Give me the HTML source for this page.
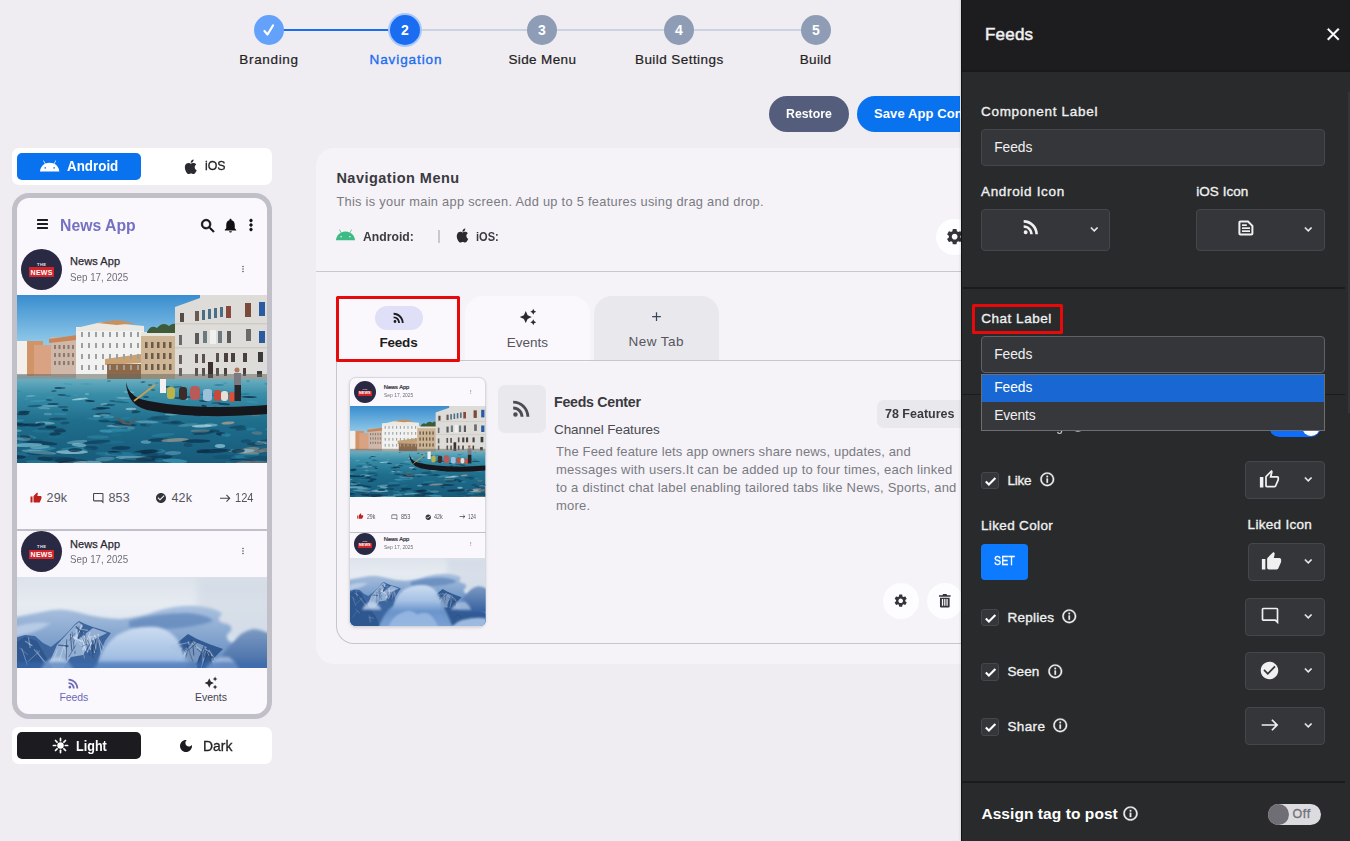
<!DOCTYPE html>
<html lang="en"><head><meta charset="utf-8"><title>Navigation</title>
<style>
html,body{margin:0;padding:0}
body{width:1350px;height:841px;overflow:hidden;background:#efedf1;position:relative;
font-family:"Liberation Sans",sans-serif;}
.t{position:absolute;white-space:nowrap;line-height:1;}
.b{position:absolute;box-sizing:border-box;}
svg{position:absolute;overflow:visible}
</style></head><body>
<div class="b" style="left:269px;top:29px;width:136px;height:2px;background:#1a6cf0;border-radius:0px;"></div>
<div class="b" style="left:405px;top:29px;width:411px;height:2px;background:#ccd3e0;border-radius:0px;"></div>
<div class="b" style="left:254px;top:15px;width:30px;height:30px;background:#64a1fb;border-radius:15px;"></div>
<div class="b" style="left:388px;top:13px;width:34px;height:34px;background:#a8c8fb;border-radius:17px;"></div>
<div class="b" style="left:390px;top:15px;width:30px;height:30px;background:#1a6cf0;border-radius:15px;"></div>
<div class="b" style="left:527px;top:15px;width:30px;height:30px;background:#8e9db5;border-radius:15px;"></div>
<div class="b" style="left:664px;top:15px;width:30px;height:30px;background:#8e9db5;border-radius:15px;"></div>
<div class="b" style="left:801px;top:15px;width:30px;height:30px;background:#8e9db5;border-radius:15px;"></div>
<div class="t" style="left:401.0px;top:22.5px;font-size:14px;font-weight:700;color:#fff;letter-spacing:0.00px;">2</div>
<div class="t" style="left:538.0px;top:22.5px;font-size:14px;font-weight:700;color:#fff;letter-spacing:0.00px;">3</div>
<div class="t" style="left:675.0px;top:22.5px;font-size:14px;font-weight:700;color:#fff;letter-spacing:0.00px;">4</div>
<div class="t" style="left:812.0px;top:22.5px;font-size:14px;font-weight:700;color:#fff;letter-spacing:0.00px;">5</div>
<svg style="left:262px;top:23px" width="14" height="14" viewBox="0 0 14 14"><path d="M2.5 8 L5.5 11.5 L11 2.5" fill="none" stroke="#fff" stroke-width="2.2" stroke-linecap="round" stroke-linejoin="round"/></svg>
<div class="t" style="left:239.3px;top:52.6px;font-size:13.5px;font-weight:400;color:#222;letter-spacing:0.67px;-webkit-text-stroke:0.2px #222;">Branding</div>
<div class="t" style="left:369.5px;top:52.6px;font-size:13.5px;font-weight:400;color:#1a6cf0;letter-spacing:0.91px;-webkit-text-stroke:0.35px #1a6cf0;">Navigation</div>
<div class="t" style="left:508.4px;top:52.6px;font-size:13.5px;font-weight:400;color:#222;letter-spacing:0.38px;-webkit-text-stroke:0.2px #222;">Side Menu</div>
<div class="t" style="left:635.0px;top:52.6px;font-size:13.5px;font-weight:400;color:#222;letter-spacing:0.43px;-webkit-text-stroke:0.2px #222;">Build Settings</div>
<div class="t" style="left:799.8px;top:52.6px;font-size:13.5px;font-weight:400;color:#222;letter-spacing:0.30px;-webkit-text-stroke:0.2px #222;">Build</div>
<div class="b" style="left:769px;top:96px;width:80px;height:36px;background:#545e7c;border-radius:18px;"></div>
<div class="t" style="left:786.0px;top:107.3px;font-size:13px;font-weight:700;color:#fff;letter-spacing:0.00px;transform:scaleX(0.946);transform-origin:0 0;">Restore</div>
<div class="b" style="left:857px;top:96px;width:103px;height:36px;background:#0872ef;border-radius:0px;border-radius:18px 0 0 18px;"></div>
<div class="t" style="left:874.0px;top:107.3px;font-size:13px;font-weight:700;color:#fff;letter-spacing:0.00px;letter-spacing:0.1px;">Save App Configuration</div>
<div class="b" style="left:12px;top:148px;width:260px;height:37px;background:#fff;border-radius:7px;"></div>
<div class="b" style="left:17px;top:153px;width:124px;height:27px;background:#0872ef;border-radius:5px;"></div>
<div class="t" style="left:66.7px;top:159.2px;font-size:14.5px;font-weight:700;color:#fff;letter-spacing:0.00px;transform:scaleX(0.923);transform-origin:0 0;">Android</div>
<div class="t" style="left:205.0px;top:159.4px;font-size:13.6px;font-weight:400;color:#222;letter-spacing:0.00px;-webkit-text-stroke:0.3px #222;transform:scaleX(0.909);transform-origin:0 0;">iOS</div>
<div class="b" style="left:12px;top:193px;width:260px;height:526px;background:#faf8fd;border-radius:17px;border:5px solid #c1c0c9;"></div>
<div class="t" style="left:59.8px;top:216.8px;font-size:16.5px;font-weight:700;color:#7470c2;letter-spacing:0.00px;transform:scaleX(0.956);transform-origin:0 0;">News App</div>
<div class="b" style="left:12px;top:727px;width:260px;height:37px;background:#fff;border-radius:7px;"></div>
<div class="b" style="left:17px;top:732px;width:124px;height:27px;background:#1c1c20;border-radius:5px;"></div>
<div class="t" style="left:76.0px;top:738.7px;font-size:14.5px;font-weight:700;color:#fff;letter-spacing:0.00px;transform:scaleX(0.869);transform-origin:0 0;">Light</div>
<div class="t" style="left:202.6px;top:738.7px;font-size:14.5px;font-weight:400;color:#222;letter-spacing:0.00px;-webkit-text-stroke:0.3px #222;transform:scaleX(0.960);transform-origin:0 0;">Dark</div>
<div class="b" style="left:316px;top:148px;width:684px;height:516px;background:#f5f3f8;border-radius:18px;"></div>
<div class="t" style="left:336.4px;top:171.2px;font-size:14.5px;font-weight:700;color:#3a3a40;letter-spacing:0.48px;">Navigation Menu</div>
<div class="t" style="left:336.4px;top:196.4px;font-size:12.8px;font-weight:400;color:#7a7a82;letter-spacing:0.30px;">This is your main app screen. Add up to 5 features using drag and drop.</div>
<div class="t" style="left:362.8px;top:230.0px;font-size:13px;font-weight:700;color:#3a3a40;letter-spacing:0.00px;transform:scaleX(0.938);transform-origin:0 0;">Android:</div>
<div class="t" style="left:476.2px;top:230.0px;font-size:13px;font-weight:700;color:#3a3a40;letter-spacing:0.00px;transform:scaleX(0.853);transform-origin:0 0;">iOS:</div>
<div class="b" style="left:438px;top:230px;width:2px;height:13px;background:#c8c8ce;border-radius:0px;"></div>
<div class="b" style="left:316px;top:271px;width:684px;height:1px;background:#c8c8ce;border-radius:0px;"></div>
<svg style="left:37.6px;top:154.0px" width="23.3" height="23.3" viewBox="0 0 24 24"><path d="M16.61 15.15C16.15 15.15 15.77 14.78 15.77 14.32S16.15 13.5 16.61 13.5H16.61C17.07 13.5 17.45 13.86 17.45 14.32C17.45 14.78 17.07 15.15 16.61 15.15M7.41 15.15C6.95 15.15 6.57 14.78 6.57 14.32C6.57 13.86 6.95 13.5 7.41 13.5H7.41C7.87 13.5 8.24 13.86 8.24 14.32C8.24 14.78 7.87 15.15 7.41 15.15M16.91 10.14L18.58 7.26C18.67 7.09 18.61 6.88 18.45 6.79C18.28 6.69 18.07 6.75 18 6.92L16.29 9.83C14.95 9.22 13.5 8.9 12 8.91C10.47 8.91 9 9.24 7.73 9.82L6.04 6.91C5.95 6.74 5.74 6.68 5.57 6.78C5.4 6.87 5.35 7.08 5.44 7.25L7.1 10.13C4.25 11.69 2.29 14.58 2 18H22C21.72 14.59 19.77 11.7 16.91 10.14H16.91Z" fill="#fff" /></svg>
<svg style="left:181.8px;top:157.9px" width="17.5" height="17.5" viewBox="0 0 24 24"><path d="M18.71,19.5C17.88,20.74 17,21.95 15.66,21.97C14.32,22 13.89,21.18 12.37,21.18C10.84,21.18 10.37,21.95 9.1,22C7.79,22.05 6.8,20.68 5.96,19.47C4.25,17 2.94,12.45 4.7,9.39C5.57,7.87 7.13,6.91 8.82,6.88C10.1,6.86 11.32,7.75 12.11,7.75C12.89,7.75 14.37,6.68 15.92,6.84C16.57,6.87 18.39,7.1 19.56,8.82C19.47,8.88 17.39,10.1 17.41,12.63C17.44,15.65 20.06,16.66 20.09,16.67C20.06,16.74 19.67,18.11 18.71,19.5M13,3.5C13.73,2.67 14.94,2.04 15.94,2C16.07,3.17 15.6,4.35 14.9,5.19C14.21,6.04 13.07,6.7 11.95,6.61C11.8,5.46 12.36,4.26 13,3.5Z" fill="#2a2a30" /></svg>
<svg style="left:51.5px;top:736.7px" width="17" height="17" viewBox="0 0 24 24"><circle cx="12" cy="12" r="4.600" fill="#fff"/><g stroke="#fff" stroke-width="2.400" stroke-linecap="round"><line x1="18.80" y1="12.00" x2="22.00" y2="12.00"/><line x1="16.81" y1="16.81" x2="19.07" y2="19.07"/><line x1="12.00" y1="18.80" x2="12.00" y2="22.00"/><line x1="7.19" y1="16.81" x2="4.93" y2="19.07"/><line x1="5.20" y1="12.00" x2="2.00" y2="12.00"/><line x1="7.19" y1="7.19" x2="4.93" y2="4.93"/><line x1="12.00" y1="5.20" x2="12.00" y2="2.00"/><line x1="16.81" y1="7.19" x2="19.07" y2="4.93"/></g></svg>
<svg style="left:178.0px;top:737.5px" width="16" height="16" viewBox="0 0 24 24"><path d="M12 3c-4.970 0-9 4.030-9 9s4.030 9 9 9 9-4.030 9-9c0-.46-.04-.92-.1-1.360-.98 1.370-2.580 2.260-4.400 2.260-2.980 0-5.400-2.420-5.400-5.400 0-1.810.89-3.420 2.260-4.400-.44-.06-.9-.1-1.360-.1z" fill="#1c1c20" /></svg>
<div class="b" style="left:37px;top:218.5px;width:11.200000000000003px;height:2.0999999999999943px;background:#1c1c20;border-radius:0.6px;"></div>
<div class="b" style="left:37px;top:222.5px;width:11.200000000000003px;height:2.0999999999999943px;background:#1c1c20;border-radius:0.6px;"></div>
<div class="b" style="left:37px;top:226.5px;width:11.200000000000003px;height:2.0999999999999943px;background:#1c1c20;border-radius:0.6px;"></div>
<svg style="left:198.5px;top:216.5px" width="18" height="18" viewBox="0 0 24 24"><path d="M15.5 14h-.79l-.28-.27C15.41 12.59 16 11.11 16 9.5 16 5.91 13.09 3 9.5 3S3 5.91 3 9.5 5.91 16 9.5 16c1.61 0 3.09-.59 4.23-1.57l.27.28v.79l5 4.99L20.49 19l-4.99-5zm-6 0C7.01 14 5 11.99 5 9.5S7.01 5 9.5 5 14 7.01 14 9.5 11.99 14 9.5 14z" fill="#111" stroke="#111" stroke-width="0.900"/></svg>
<svg style="left:222.0px;top:216.5px" width="17" height="17" viewBox="0 0 24 24"><path d="M12 22c1.1 0 2-.9 2-2h-4c0 1.1.89 2 2 2zm6-6v-5c0-3.07-1.64-5.64-4.5-6.32V4c0-.83-.67-1.5-1.5-1.5s-1.5.67-1.5 1.5v.68C7.63 5.36 6 7.92 6 11v5l-2 2v1h16v-1l-2-2z" fill="#111" /></svg>
<svg style="left:242.0px;top:216.0px" width="18" height="18" viewBox="0 0 24 24"><path d="M12 8c1.1 0 2-.9 2-2s-.9-2-2-2-2 .9-2 2 .9 2 2 2zm0 2c-1.1 0-2 .9-2 2s.9 2 2 2 2-.9 2-2-.9-2-2-2zm0 6c-1.1 0-2 .9-2 2s.9 2 2 2 2-.9 2-2-.9-2-2-2z" fill="#111" stroke="#111" stroke-width="0.500"/></svg>
<div class="b" style="left:21.0px;top:248.89999999999998px;width:41.0px;height:41.0px;background:#2a2944;border-radius:20.5px;"></div><div class="t" style="left:37.0px;top:262.9px;font-size:4.0px;font-weight:700;color:#e8e8f0;letter-spacing:0.50px;">THE</div><div class="b" style="left:28.6px;top:267.29999999999995px;width:25.799999999999997px;height:9.600000000000023px;background:#d0252b;border-radius:0.5px;"></div><div class="t" style="left:30.6px;top:269.0px;font-size:7.0px;font-weight:700;color:#fff;letter-spacing:0.27px;">NEWS</div>
<div class="t" style="left:70.0px;top:256.3px;font-size:11px;font-weight:400;color:#2a2a30;letter-spacing:0.07px;-webkit-text-stroke:0.25px #2a2a30;">News App</div>
<div class="t" style="left:70.0px;top:271.5px;font-size:10.5px;font-weight:400;color:#707078;letter-spacing:0.00px;transform:scaleX(0.932);transform-origin:0 0;">Sep 17, 2025</div>
<svg style="left:238.0px;top:264.0px" width="10" height="10" viewBox="0 0 24 24"><path d="M12 8c1.1 0 2-.9 2-2s-.9-2-2-2-2 .9-2 2 .9 2 2 2zm0 2c-1.1 0-2 .9-2 2s.9 2 2 2 2-.9 2-2-.9-2-2-2zm0 6c-1.1 0-2 .9-2 2s.9 2 2 2 2-.9 2-2-.9-2-2-2z" fill="#55555c" /></svg>
<svg style="left:17px;top:295px" width="250" height="168" viewBox="0 0 250 168" preserveAspectRatio="none">
<defs><linearGradient id="vs1" x1="0" y1="0" x2="0" y2="1"><stop offset="0" stop-color="#398dcf"/><stop offset=".55" stop-color="#8fc8e8"/><stop offset="1" stop-color="#a8d4ec"/></linearGradient>
<linearGradient id="vw1" x1="0" y1="0" x2="0" y2="1"><stop offset="0" stop-color="#6aaec0"/><stop offset=".18" stop-color="#3a8ea8"/><stop offset=".5" stop-color="#1f6e8c"/><stop offset="1" stop-color="#185a7a"/></linearGradient>
<clipPath id="vc1"><rect width="250" height="168"/></clipPath></defs>
<g clip-path="url(#vc1)">
<rect width="250" height="86" fill="url(#vs1)"/>
<rect x="0" y="46" width="11" height="34" fill="#f2efec"/>
<rect x="10" y="46" width="16" height="35" fill="#d09468"/>
<rect x="17" y="50" width="19" height="31" fill="#d8a283"/>
<rect x="34" y="42" width="26" height="40" fill="#cfb8aa"/><polygon points="32,44 60,40 60,45 32,48" fill="#c98558"/>
<rect x="59" y="32" width="68" height="52" fill="#f1f1ef"/><polygon points="59,33 85,27 127,31 127,36 59,36" fill="#ece8e2"/><polygon points="80,28 100,25 118,28 100,30" fill="#c9905e"/>
<rect x="124" y="38" width="35" height="47" fill="#cdb596"/><rect x="124" y="37" width="35" height="4" fill="#e8e4da"/>
<path d="M130 37 q4 -8 10 -4 q6 -7 12 -2 q5 -4 7 -1 v8 h-29z" fill="#3f5a38"/>
<polygon points="88,64 124,59 124,68 88,70" fill="#caa272"/><rect x="90" y="69" width="34" height="15" fill="#8f6848"/>
<polygon points="158,12 183,3 183,0 250,0 250,86 158,86" fill="#dedcd8"/>
<rect x="158" y="28" width="92" height="1.500" fill="#cfccc6"/><rect x="158" y="52" width="92" height="1.500" fill="#cfccc6"/>
<rect x="163" y="18" width="4" height="9" fill="#5a4a44"/><rect x="178" y="16" width="4" height="10" fill="#6a5a50"/><rect x="185" y="15" width="3" height="10" fill="#4a7088"/><rect x="191" y="14" width="3" height="10" fill="#4a7088"/><rect x="197" y="13" width="3" height="10" fill="#4a7088"/><rect x="203" y="12" width="3" height="10" fill="#4a7088"/><rect x="209" y="11" width="5" height="12" fill="#8a4a3a"/><rect x="228" y="8" width="6" height="14" fill="#7a4a3a"/><rect x="242" y="7" width="6" height="14" fill="#2a5aa0"/><rect x="162" y="40" width="3" height="10" fill="#6a6a6a"/><rect x="178" y="38" width="4" height="11" fill="#5a5a5a"/><rect x="186" y="36" width="4" height="12" fill="#6a7a80"/><rect x="193" y="35" width="6" height="14" fill="#f0f0f0"/><rect x="201" y="36" width="4" height="12" fill="#6a7a80"/><rect x="210" y="36" width="4" height="12" fill="#5a5a5a"/><rect x="229" y="34" width="5" height="12" fill="#6a6a6a"/><rect x="242" y="36" width="6" height="12" fill="#2a5aa0"/><rect x="162" y="60" width="3" height="9" fill="#6a6060"/><rect x="178" y="59" width="3" height="9" fill="#5a5050"/><rect x="185" y="59" width="3" height="9" fill="#5a5050"/><rect x="199" y="58" width="3" height="9" fill="#5a5050"/><rect x="207" y="58" width="4" height="9" fill="#4a4040"/><rect x="214" y="58" width="4" height="9" fill="#4a4040"/><rect x="226" y="58" width="4" height="9" fill="#4a4040"/><rect x="241" y="57" width="5" height="10" fill="#3a3a3a"/><rect x="162" y="73" width="3" height="8" fill="#6a6060"/><rect x="178" y="73" width="3" height="8" fill="#5a5050"/><rect x="185" y="73" width="3" height="8" fill="#5a5050"/><rect x="191" y="67" width="5" height="16" fill="#3a3030"/><rect x="199" y="73" width="3" height="8" fill="#5a5050"/><rect x="207" y="73" width="3" height="8" fill="#4a4040"/><rect x="226" y="73" width="3" height="8" fill="#4a4040"/><rect x="240" y="76" width="5" height="6" fill="#3a3a3a"/><rect x="64" y="37" width="2" height="5" fill="#9aa0a4"/><rect x="71" y="37" width="2" height="5" fill="#9aa0a4"/><rect x="78" y="37" width="2" height="5" fill="#9aa0a4"/><rect x="85" y="37" width="2" height="5" fill="#9aa0a4"/><rect x="92" y="37" width="2" height="5" fill="#9aa0a4"/><rect x="99" y="37" width="2" height="5" fill="#9aa0a4"/><rect x="106" y="37" width="2" height="5" fill="#9aa0a4"/><rect x="113" y="37" width="2" height="5" fill="#9aa0a4"/><rect x="120" y="37" width="2" height="5" fill="#9aa0a4"/><rect x="64" y="48" width="2" height="5" fill="#9aa0a4"/><rect x="71" y="48" width="2" height="5" fill="#9aa0a4"/><rect x="78" y="48" width="2" height="5" fill="#9aa0a4"/><rect x="85" y="48" width="2" height="5" fill="#9aa0a4"/><rect x="92" y="48" width="2" height="5" fill="#9aa0a4"/><rect x="99" y="48" width="2" height="5" fill="#9aa0a4"/><rect x="106" y="48" width="2" height="5" fill="#9aa0a4"/><rect x="113" y="48" width="2" height="5" fill="#9aa0a4"/><rect x="120" y="48" width="2" height="5" fill="#9aa0a4"/><rect x="64" y="59" width="2" height="5" fill="#9aa0a4"/><rect x="71" y="59" width="2" height="5" fill="#9aa0a4"/><rect x="78" y="59" width="2" height="5" fill="#9aa0a4"/><rect x="85" y="59" width="2" height="5" fill="#9aa0a4"/><rect x="92" y="59" width="2" height="5" fill="#9aa0a4"/><rect x="99" y="59" width="2" height="5" fill="#9aa0a4"/><rect x="106" y="59" width="2" height="5" fill="#9aa0a4"/><rect x="113" y="59" width="2" height="5" fill="#9aa0a4"/><rect x="120" y="59" width="2" height="5" fill="#9aa0a4"/><rect x="64" y="70" width="2" height="5" fill="#9aa0a4"/><rect x="71" y="70" width="2" height="5" fill="#9aa0a4"/><rect x="78" y="70" width="2" height="5" fill="#9aa0a4"/><rect x="85" y="70" width="2" height="5" fill="#9aa0a4"/><rect x="92" y="70" width="2" height="5" fill="#9aa0a4"/><rect x="99" y="70" width="2" height="5" fill="#9aa0a4"/><rect x="106" y="70" width="2" height="5" fill="#9aa0a4"/><rect x="113" y="70" width="2" height="5" fill="#9aa0a4"/><rect x="120" y="70" width="2" height="5" fill="#9aa0a4"/><rect x="128" y="47" width="2.500" height="6" fill="#6a5a48"/><rect x="134" y="47" width="2.500" height="6" fill="#6a5a48"/><rect x="140" y="47" width="2.500" height="6" fill="#6a5a48"/><rect x="146" y="47" width="2.500" height="6" fill="#6a5a48"/><rect x="152" y="47" width="2.500" height="6" fill="#6a5a48"/><rect x="128" y="58" width="2.500" height="6" fill="#6a5a48"/><rect x="134" y="58" width="2.500" height="6" fill="#6a5a48"/><rect x="140" y="58" width="2.500" height="6" fill="#6a5a48"/><rect x="146" y="58" width="2.500" height="6" fill="#6a5a48"/><rect x="152" y="58" width="2.500" height="6" fill="#6a5a48"/><rect x="128" y="69" width="2.500" height="6" fill="#6a5a48"/><rect x="134" y="69" width="2.500" height="6" fill="#6a5a48"/><rect x="140" y="69" width="2.500" height="6" fill="#6a5a48"/><rect x="146" y="69" width="2.500" height="6" fill="#6a5a48"/><rect x="152" y="69" width="2.500" height="6" fill="#6a5a48"/><rect x="37.0" y="50" width="2" height="4" fill="#8a7a70"/><rect x="41.5" y="50" width="2" height="4" fill="#8a7a70"/><rect x="46.0" y="50" width="2" height="4" fill="#8a7a70"/><rect x="50.5" y="50" width="2" height="4" fill="#8a7a70"/><rect x="55.0" y="50" width="2" height="4" fill="#8a7a70"/><rect x="37.0" y="58" width="2" height="4" fill="#8a7a70"/><rect x="41.5" y="58" width="2" height="4" fill="#8a7a70"/><rect x="46.0" y="58" width="2" height="4" fill="#8a7a70"/><rect x="50.5" y="58" width="2" height="4" fill="#8a7a70"/><rect x="55.0" y="58" width="2" height="4" fill="#8a7a70"/><rect x="37.0" y="66" width="2" height="4" fill="#8a7a70"/><rect x="41.5" y="66" width="2" height="4" fill="#8a7a70"/><rect x="46.0" y="66" width="2" height="4" fill="#8a7a70"/><rect x="50.5" y="66" width="2" height="4" fill="#8a7a70"/><rect x="55.0" y="66" width="2" height="4" fill="#8a7a70"/>
<rect x="0" y="79" width="250" height="6" fill="#6a6a62" opacity=".55"/>
<rect y="84" width="250" height="84" fill="url(#vw1)"/>
<ellipse cx="141" cy="124" rx="11.3" ry="1.4" fill="#0d3a55" opacity="0.43" transform="rotate(0 141 124)"/><ellipse cx="204" cy="139" rx="4.9" ry="1.7" fill="#0b2f4a" opacity="0.75" transform="rotate(2 204 139)"/><ellipse cx="97" cy="136" rx="8.4" ry="1.6" fill="#3a98b4" opacity="0.42" transform="rotate(-6 97 136)"/><ellipse cx="6" cy="130" rx="5.4" ry="1.5" fill="#0b2f4a" opacity="0.70" transform="rotate(-2 6 130)"/><ellipse cx="43" cy="136" rx="6.2" ry="1.6" fill="#0b2f4a" opacity="0.65" transform="rotate(-1 43 136)"/><ellipse cx="259" cy="109" rx="9.4" ry="1.1" fill="#6fb0c4" opacity="0.46" transform="rotate(3 259 109)"/><ellipse cx="-2" cy="129" rx="8.8" ry="1.5" fill="#0b2f4a" opacity="0.73" transform="rotate(-1 -2 129)"/><ellipse cx="219" cy="166" rx="5.2" ry="2.2" fill="#0b2f4a" opacity="0.79" transform="rotate(-1 219 166)"/><ellipse cx="160" cy="92" rx="5.5" ry="0.7" fill="#0b2f4a" opacity="0.49" transform="rotate(-6 160 92)"/><ellipse cx="239" cy="120" rx="4.2" ry="1.3" fill="#9a8478" opacity="0.43" transform="rotate(1 239 120)"/><ellipse cx="41" cy="124" rx="9.6" ry="1.4" fill="#0a2840" opacity="0.40" transform="rotate(-1 41 124)"/><ellipse cx="63" cy="104" rx="8.4" ry="1.0" fill="#a8d4e0" opacity="0.80" transform="rotate(-6 63 104)"/><ellipse cx="259" cy="102" rx="5.8" ry="0.9" fill="#2a86a4" opacity="0.80" transform="rotate(-3 259 102)"/><ellipse cx="199" cy="108" rx="4.7" ry="1.0" fill="#0b2f4a" opacity="0.38" transform="rotate(-3 199 108)"/><ellipse cx="-6" cy="139" rx="7.9" ry="1.7" fill="#2a86a4" opacity="0.78" transform="rotate(-0 -6 139)"/><ellipse cx="224" cy="134" rx="5.6" ry="1.6" fill="#0d3a55" opacity="0.46" transform="rotate(-4 224 134)"/><ellipse cx="244" cy="148" rx="6.7" ry="1.9" fill="#a8d4e0" opacity="0.54" transform="rotate(-5 244 148)"/><ellipse cx="250" cy="89" rx="2.7" ry="0.7" fill="#1f7494" opacity="0.54" transform="rotate(5 250 89)"/><ellipse cx="130" cy="127" rx="11.9" ry="1.4" fill="#8cc4d4" opacity="0.45" transform="rotate(1 130 127)"/><ellipse cx="156" cy="158" rx="8.4" ry="2.0" fill="#8cc4d4" opacity="0.38" transform="rotate(-1 156 158)"/><ellipse cx="3" cy="107" rx="4.3" ry="1.0" fill="#2a86a4" opacity="0.39" transform="rotate(-4 3 107)"/><ellipse cx="79" cy="124" rx="9.6" ry="1.4" fill="#2a86a4" opacity="0.62" transform="rotate(5 79 124)"/><ellipse cx="87" cy="126" rx="6.1" ry="1.4" fill="#0b2f4a" opacity="0.57" transform="rotate(3 87 126)"/><ellipse cx="260" cy="113" rx="3.3" ry="1.1" fill="#3a98b4" opacity="0.37" transform="rotate(5 260 113)"/><ellipse cx="25" cy="148" rx="15.6" ry="1.9" fill="#0b2f4a" opacity="0.66" transform="rotate(5 25 148)"/><ellipse cx="103" cy="159" rx="15.2" ry="2.1" fill="#6fb0c4" opacity="0.36" transform="rotate(2 103 159)"/><ellipse cx="-7" cy="118" rx="3.6" ry="1.2" fill="#0b2f4a" opacity="0.80" transform="rotate(5 -7 118)"/><ellipse cx="95" cy="147" rx="12.8" ry="1.8" fill="#1f7494" opacity="0.56" transform="rotate(0 95 147)"/><ellipse cx="129" cy="130" rx="6.4" ry="1.5" fill="#0b2f4a" opacity="0.45" transform="rotate(2 129 130)"/><ellipse cx="156" cy="128" rx="11.9" ry="1.4" fill="#0b2f4a" opacity="0.41" transform="rotate(1 156 128)"/><ellipse cx="194" cy="130" rx="6.7" ry="1.5" fill="#a8d4e0" opacity="0.50" transform="rotate(2 194 130)"/><ellipse cx="106" cy="103" rx="7.2" ry="0.9" fill="#8cc4d4" opacity="0.52" transform="rotate(1 106 103)"/><ellipse cx="27" cy="113" rx="6.4" ry="1.1" fill="#8cc4d4" opacity="0.67" transform="rotate(5 27 113)"/><ellipse cx="36" cy="109" rx="5.7" ry="1.1" fill="#0d3a55" opacity="0.72" transform="rotate(-1 36 109)"/><ellipse cx="171" cy="130" rx="10.3" ry="1.5" fill="#6fb0c4" opacity="0.38" transform="rotate(-6 171 130)"/><ellipse cx="1" cy="159" rx="14.2" ry="2.1" fill="#1f7494" opacity="0.64" transform="rotate(1 1 159)"/><ellipse cx="99" cy="140" rx="6.0" ry="1.7" fill="#1f7494" opacity="0.46" transform="rotate(-4 99 140)"/><ellipse cx="160" cy="90" rx="3.7" ry="0.7" fill="#3a98b4" opacity="0.64" transform="rotate(-2 160 90)"/><ellipse cx="43" cy="93" rx="5.8" ry="0.7" fill="#0b2f4a" opacity="0.69" transform="rotate(0 43 93)"/><ellipse cx="51" cy="89" rx="5.0" ry="0.7" fill="#3a98b4" opacity="0.58" transform="rotate(6 51 89)"/><ellipse cx="219" cy="99" rx="6.1" ry="0.9" fill="#0a2840" opacity="0.77" transform="rotate(3 219 99)"/><ellipse cx="112" cy="97" rx="5.4" ry="0.8" fill="#a8d4e0" opacity="0.60" transform="rotate(2 112 97)"/><ellipse cx="211" cy="128" rx="6.6" ry="1.5" fill="#b0a090" opacity="0.77" transform="rotate(-5 211 128)"/><ellipse cx="95" cy="106" rx="3.0" ry="1.0" fill="#0f4460" opacity="0.47" transform="rotate(3 95 106)"/><ellipse cx="126" cy="87" rx="1.7" ry="0.6" fill="#0a2840" opacity="0.70" transform="rotate(-0 126 87)"/><ellipse cx="208" cy="88" rx="1.9" ry="0.6" fill="#2a86a4" opacity="0.59" transform="rotate(2 208 88)"/><ellipse cx="117" cy="163" rx="18.6" ry="2.2" fill="#6fb0c4" opacity="0.73" transform="rotate(2 117 163)"/><ellipse cx="123" cy="165" rx="18.3" ry="2.2" fill="#0d3a55" opacity="0.55" transform="rotate(1 123 165)"/><ellipse cx="142" cy="156" rx="6.8" ry="2.0" fill="#3a98b4" opacity="0.47" transform="rotate(2 142 156)"/><ellipse cx="225" cy="166" rx="13.7" ry="2.2" fill="#0d3a55" opacity="0.59" transform="rotate(1 225 166)"/><ellipse cx="135" cy="103" rx="5.3" ry="0.9" fill="#2a86a4" opacity="0.59" transform="rotate(-5 135 103)"/><ellipse cx="137" cy="163" rx="18.5" ry="2.2" fill="#0b2f4a" opacity="0.66" transform="rotate(-5 137 163)"/><ellipse cx="102" cy="131" rx="12.8" ry="1.5" fill="#a8d4e0" opacity="0.46" transform="rotate(-0 102 131)"/><ellipse cx="233" cy="115" rx="9.9" ry="1.2" fill="#6fb0c4" opacity="0.49" transform="rotate(-4 233 115)"/><ellipse cx="240" cy="138" rx="5.3" ry="1.7" fill="#8a8a80" opacity="0.45" transform="rotate(2 240 138)"/><ellipse cx="86" cy="113" rx="7.3" ry="1.1" fill="#0b2f4a" opacity="0.73" transform="rotate(1 86 113)"/><ellipse cx="179" cy="146" rx="14.4" ry="1.8" fill="#0a2840" opacity="0.63" transform="rotate(0 179 146)"/><ellipse cx="134" cy="159" rx="7.7" ry="2.1" fill="#0d3a55" opacity="0.45" transform="rotate(3 134 159)"/><ellipse cx="234" cy="154" rx="8.6" ry="2.0" fill="#8a8a80" opacity="0.75" transform="rotate(-4 234 154)"/><ellipse cx="186" cy="106" rx="4.1" ry="1.0" fill="#0a2840" opacity="0.59" transform="rotate(2 186 106)"/><ellipse cx="160" cy="103" rx="7.1" ry="0.9" fill="#0f4460" opacity="0.76" transform="rotate(6 160 103)"/><ellipse cx="127" cy="96" rx="5.9" ry="0.8" fill="#3a98b4" opacity="0.72" transform="rotate(4 127 96)"/><ellipse cx="-3" cy="126" rx="10.2" ry="1.4" fill="#3a98b4" opacity="0.57" transform="rotate(-4 -3 126)"/><ellipse cx="37" cy="96" rx="2.8" ry="0.8" fill="#0b2f4a" opacity="0.61" transform="rotate(-4 37 96)"/><ellipse cx="11" cy="143" rx="5.2" ry="1.8" fill="#0a2840" opacity="0.58" transform="rotate(-1 11 143)"/><ellipse cx="-6" cy="136" rx="11.0" ry="1.6" fill="#8cc4d4" opacity="0.53" transform="rotate(-2 -6 136)"/><ellipse cx="239" cy="117" rx="7.7" ry="1.2" fill="#0b2f4a" opacity="0.50" transform="rotate(-5 239 117)"/><ellipse cx="226" cy="157" rx="16.4" ry="2.0" fill="#6fb0c4" opacity="0.58" transform="rotate(6 226 157)"/><ellipse cx="60" cy="154" rx="15.9" ry="2.0" fill="#2a86a4" opacity="0.72" transform="rotate(-1 60 154)"/><ellipse cx="228" cy="161" rx="14.3" ry="2.1" fill="#2a86a4" opacity="0.68" transform="rotate(-5 228 161)"/><ellipse cx="117" cy="115" rx="2.9" ry="1.2" fill="#0b2f4a" opacity="0.45" transform="rotate(5 117 115)"/><ellipse cx="81" cy="142" rx="11.3" ry="1.7" fill="#3a98b4" opacity="0.38" transform="rotate(0 81 142)"/><ellipse cx="48" cy="128" rx="4.5" ry="1.4" fill="#0b2f4a" opacity="0.40" transform="rotate(-5 48 128)"/><ellipse cx="110" cy="106" rx="5.7" ry="1.0" fill="#3a98b4" opacity="0.52" transform="rotate(-5 110 106)"/><ellipse cx="235" cy="107" rx="6.1" ry="1.0" fill="#3a98b4" opacity="0.61" transform="rotate(6 235 107)"/><ellipse cx="209" cy="140" rx="4.8" ry="1.7" fill="#2a86a4" opacity="0.77" transform="rotate(-1 209 140)"/><ellipse cx="221" cy="167" rx="12.9" ry="2.2" fill="#1f7494" opacity="0.54" transform="rotate(0 221 167)"/><ellipse cx="89" cy="136" rx="6.8" ry="1.6" fill="#3a98b4" opacity="0.77" transform="rotate(2 89 136)"/><ellipse cx="-3" cy="149" rx="13.5" ry="1.9" fill="#3a98b4" opacity="0.42" transform="rotate(3 -3 149)"/><ellipse cx="232" cy="119" rx="9.0" ry="1.3" fill="#8a8a80" opacity="0.54" transform="rotate(-0 232 119)"/><ellipse cx="56" cy="168" rx="12.7" ry="2.3" fill="#6fb0c4" opacity="0.76" transform="rotate(-4 56 168)"/><ellipse cx="56" cy="167" rx="15.1" ry="2.2" fill="#0a2840" opacity="0.56" transform="rotate(-4 56 167)"/><ellipse cx="133" cy="90" rx="2.3" ry="0.7" fill="#0a2840" opacity="0.55" transform="rotate(-3 133 90)"/><ellipse cx="103" cy="135" rx="11.6" ry="1.6" fill="#2a86a4" opacity="0.78" transform="rotate(3 103 135)"/><ellipse cx="21" cy="106" rx="8.2" ry="1.0" fill="#3a98b4" opacity="0.73" transform="rotate(-3 21 106)"/><ellipse cx="186" cy="137" rx="11.1" ry="1.6" fill="#0f4460" opacity="0.44" transform="rotate(-3 186 137)"/><ellipse cx="237" cy="168" rx="17.8" ry="2.3" fill="#9a8478" opacity="0.54" transform="rotate(1 237 168)"/><ellipse cx="136" cy="95" rx="2.3" ry="0.8" fill="#0d3a55" opacity="0.60" transform="rotate(2 136 95)"/><ellipse cx="119" cy="117" rx="4.6" ry="1.2" fill="#0d3a55" opacity="0.73" transform="rotate(-5 119 117)"/><ellipse cx="208" cy="96" rx="5.2" ry="0.8" fill="#2a86a4" opacity="0.55" transform="rotate(3 208 96)"/><ellipse cx="31" cy="119" rx="4.3" ry="1.3" fill="#6fb0c4" opacity="0.50" transform="rotate(1 31 119)"/><ellipse cx="239" cy="149" rx="9.4" ry="1.9" fill="#0b2f4a" opacity="0.50" transform="rotate(1 239 149)"/><ellipse cx="143" cy="122" rx="10.1" ry="1.3" fill="#0b2f4a" opacity="0.38" transform="rotate(-3 143 122)"/><ellipse cx="12" cy="142" rx="7.4" ry="1.7" fill="#3a98b4" opacity="0.50" transform="rotate(5 12 142)"/><ellipse cx="167" cy="104" rx="4.4" ry="1.0" fill="#a8d4e0" opacity="0.67" transform="rotate(1 167 104)"/><ellipse cx="244" cy="163" rx="17.5" ry="2.2" fill="#0f4460" opacity="0.45" transform="rotate(6 244 163)"/><ellipse cx="129" cy="147" rx="5.3" ry="1.8" fill="#8cc4d4" opacity="0.51" transform="rotate(-1 129 147)"/><ellipse cx="43" cy="119" rx="7.5" ry="1.3" fill="#3a98b4" opacity="0.42" transform="rotate(1 43 119)"/><ellipse cx="14" cy="101" rx="4.8" ry="0.9" fill="#8cc4d4" opacity="0.45" transform="rotate(-5 14 101)"/><ellipse cx="70" cy="99" rx="2.2" ry="0.9" fill="#a8d4e0" opacity="0.38" transform="rotate(1 70 99)"/><ellipse cx="13" cy="152" rx="5.6" ry="1.9" fill="#1f7494" opacity="0.39" transform="rotate(2 13 152)"/><ellipse cx="191" cy="98" rx="5.6" ry="0.8" fill="#0d3a55" opacity="0.57" transform="rotate(5 191 98)"/><ellipse cx="114" cy="114" rx="5.5" ry="1.2" fill="#a8d4e0" opacity="0.65" transform="rotate(-0 114 114)"/><ellipse cx="185" cy="131" rx="10.4" ry="1.5" fill="#a8d4e0" opacity="0.79" transform="rotate(-2 185 131)"/><ellipse cx="92" cy="86" rx="1.9" ry="0.6" fill="#0b2f4a" opacity="0.59" transform="rotate(3 92 86)"/><ellipse cx="104" cy="153" rx="9.8" ry="2.0" fill="#0d3a55" opacity="0.80" transform="rotate(-1 104 153)"/><ellipse cx="45" cy="100" rx="4.6" ry="0.9" fill="#0b2f4a" opacity="0.56" transform="rotate(3 45 100)"/><ellipse cx="32" cy="111" rx="9.3" ry="1.1" fill="#a8d4e0" opacity="0.36" transform="rotate(-0 32 111)"/><ellipse cx="74" cy="153" rx="7.1" ry="2.0" fill="#0d3a55" opacity="0.62" transform="rotate(-0 74 153)"/><ellipse cx="109" cy="129" rx="11.8" ry="1.5" fill="#0f4460" opacity="0.63" transform="rotate(5 109 129)"/><ellipse cx="220" cy="132" rx="8.4" ry="1.5" fill="#0f4460" opacity="0.70" transform="rotate(-5 220 132)"/><ellipse cx="98" cy="158" rx="7.7" ry="2.1" fill="#0a2840" opacity="0.79" transform="rotate(4 98 158)"/><ellipse cx="203" cy="151" rx="5.2" ry="1.9" fill="#8cc4d4" opacity="0.76" transform="rotate(-1 203 151)"/><ellipse cx="104" cy="107" rx="8.2" ry="1.0" fill="#0f4460" opacity="0.42" transform="rotate(5 104 107)"/><ellipse cx="25" cy="154" rx="13.9" ry="2.0" fill="#3a98b4" opacity="0.59" transform="rotate(-4 25 154)"/><ellipse cx="-10" cy="151" rx="14.4" ry="1.9" fill="#8cc4d4" opacity="0.39" transform="rotate(-3 -10 151)"/><ellipse cx="16" cy="146" rx="9.8" ry="1.8" fill="#0f4460" opacity="0.36" transform="rotate(-4 16 146)"/><ellipse cx="174" cy="102" rx="6.9" ry="0.9" fill="#0b2f4a" opacity="0.59" transform="rotate(0 174 102)"/><ellipse cx="215" cy="99" rx="3.9" ry="0.9" fill="#0b2f4a" opacity="0.60" transform="rotate(6 215 99)"/><ellipse cx="8" cy="142" rx="4.9" ry="1.7" fill="#0a2840" opacity="0.65" transform="rotate(3 8 142)"/><ellipse cx="23" cy="152" rx="10.0" ry="1.9" fill="#6fb0c4" opacity="0.67" transform="rotate(-3 23 152)"/><ellipse cx="114" cy="133" rx="3.8" ry="1.6" fill="#6fb0c4" opacity="0.44" transform="rotate(1 114 133)"/><ellipse cx="92" cy="110" rx="6.4" ry="1.1" fill="#0f4460" opacity="0.69" transform="rotate(1 92 110)"/><ellipse cx="41" cy="93" rx="3.7" ry="0.7" fill="#0f4460" opacity="0.78" transform="rotate(1 41 93)"/><ellipse cx="80" cy="147" rx="13.9" ry="1.8" fill="#0d3a55" opacity="0.63" transform="rotate(-4 80 147)"/><ellipse cx="38" cy="139" rx="6.0" ry="1.7" fill="#0a2840" opacity="0.62" transform="rotate(-5 38 139)"/><ellipse cx="32" cy="105" rx="3.2" ry="1.0" fill="#0b2f4a" opacity="0.50" transform="rotate(4 32 105)"/><ellipse cx="28" cy="164" rx="7.9" ry="2.2" fill="#0a2840" opacity="0.57" transform="rotate(5 28 164)"/><ellipse cx="186" cy="138" rx="10.4" ry="1.7" fill="#0d3a55" opacity="0.62" transform="rotate(-6 186 138)"/><ellipse cx="82" cy="114" rx="7.6" ry="1.2" fill="#0a2840" opacity="0.44" transform="rotate(-2 82 114)"/><ellipse cx="18" cy="111" rx="7.7" ry="1.1" fill="#0f4460" opacity="0.60" transform="rotate(-2 18 111)"/><ellipse cx="28" cy="128" rx="10.0" ry="1.5" fill="#6fb0c4" opacity="0.80" transform="rotate(2 28 128)"/><ellipse cx="143" cy="165" rx="5.5" ry="2.2" fill="#2a86a4" opacity="0.41" transform="rotate(-0 143 165)"/><ellipse cx="80" cy="121" rx="3.9" ry="1.3" fill="#a8d4e0" opacity="0.56" transform="rotate(-5 80 121)"/><ellipse cx="27" cy="168" rx="18.1" ry="2.3" fill="#3a98b4" opacity="0.38" transform="rotate(5 27 168)"/><ellipse cx="191" cy="100" rx="7.3" ry="0.9" fill="#0d3a55" opacity="0.41" transform="rotate(4 191 100)"/><ellipse cx="232" cy="110" rx="4.3" ry="1.1" fill="#2a86a4" opacity="0.43" transform="rotate(1 232 110)"/><ellipse cx="-1" cy="92" rx="2.7" ry="0.7" fill="#6fb0c4" opacity="0.41" transform="rotate(3 -1 92)"/><ellipse cx="235" cy="157" rx="12.7" ry="2.0" fill="#9a8478" opacity="0.56" transform="rotate(-4 235 157)"/><ellipse cx="144" cy="118" rx="4.4" ry="1.3" fill="#1f7494" opacity="0.46" transform="rotate(5 144 118)"/><ellipse cx="202" cy="90" rx="5.0" ry="0.7" fill="#1f7494" opacity="0.78" transform="rotate(1 202 90)"/><ellipse cx="101" cy="125" rx="8.9" ry="1.4" fill="#1f7494" opacity="0.69" transform="rotate(-0 101 125)"/><ellipse cx="216" cy="170" rx="17.6" ry="2.3" fill="#8a8a80" opacity="0.76" transform="rotate(0 216 170)"/><ellipse cx="107" cy="130" rx="12.1" ry="1.5" fill="#0b2f4a" opacity="0.48" transform="rotate(1 107 130)"/><ellipse cx="92" cy="122" rx="5.9" ry="1.3" fill="#3a98b4" opacity="0.74" transform="rotate(-3 92 122)"/><ellipse cx="55" cy="157" rx="16.0" ry="2.0" fill="#a8d4e0" opacity="0.66" transform="rotate(0 55 157)"/><ellipse cx="73" cy="106" rx="5.0" ry="1.0" fill="#0b2f4a" opacity="0.80" transform="rotate(3 73 106)"/><ellipse cx="90" cy="159" rx="12.0" ry="2.1" fill="#2a86a4" opacity="0.45" transform="rotate(3 90 159)"/><ellipse cx="234" cy="134" rx="4.7" ry="1.6" fill="#2a86a4" opacity="0.61" transform="rotate(-1 234 134)"/><ellipse cx="187" cy="111" rx="2.8" ry="1.1" fill="#0a2840" opacity="0.75" transform="rotate(4 187 111)"/><ellipse cx="86" cy="119" rx="7.8" ry="1.3" fill="#0b2f4a" opacity="0.55" transform="rotate(-2 86 119)"/><ellipse cx="29" cy="113" rx="8.5" ry="1.2" fill="#2a86a4" opacity="0.44" transform="rotate(4 29 113)"/><ellipse cx="6" cy="144" rx="7.7" ry="1.8" fill="#a8d4e0" opacity="0.36" transform="rotate(2 6 144)"/><ellipse cx="141" cy="145" rx="10.2" ry="1.8" fill="#0b2f4a" opacity="0.64" transform="rotate(-2 141 145)"/><ellipse cx="250" cy="155" rx="8.1" ry="2.0" fill="#9a8478" opacity="0.54" transform="rotate(-4 250 155)"/><ellipse cx="23" cy="158" rx="13.8" ry="2.1" fill="#0d3a55" opacity="0.58" transform="rotate(-2 23 158)"/><ellipse cx="207" cy="109" rx="6.2" ry="1.1" fill="#0d3a55" opacity="0.79" transform="rotate(5 207 109)"/><ellipse cx="51" cy="101" rx="3.0" ry="0.9" fill="#1f7494" opacity="0.79" transform="rotate(-1 51 101)"/><ellipse cx="133" cy="130" rx="4.0" ry="1.5" fill="#1f7494" opacity="0.59" transform="rotate(-1 133 130)"/><ellipse cx="34" cy="134" rx="13.5" ry="1.6" fill="#0d3a55" opacity="0.48" transform="rotate(1 34 134)"/><ellipse cx="232" cy="102" rx="8.1" ry="0.9" fill="#0a2840" opacity="0.76" transform="rotate(1 232 102)"/><ellipse cx="231" cy="86" rx="1.8" ry="0.6" fill="#0f4460" opacity="0.49" transform="rotate(-0 231 86)"/><ellipse cx="69" cy="89" rx="5.2" ry="0.7" fill="#3a98b4" opacity="0.68" transform="rotate(0 69 89)"/><ellipse cx="198" cy="136" rx="5.0" ry="1.6" fill="#0a2840" opacity="0.47" transform="rotate(3 198 136)"/><ellipse cx="60" cy="147" rx="10.6" ry="1.8" fill="#6fb0c4" opacity="0.57" transform="rotate(-6 60 147)"/><ellipse cx="183" cy="136" rx="9.7" ry="1.6" fill="#b0a090" opacity="0.36" transform="rotate(-0 183 136)"/><ellipse cx="109" cy="123" rx="5.4" ry="1.3" fill="#2a86a4" opacity="0.40" transform="rotate(-4 109 123)"/><ellipse cx="146" cy="140" rx="11.7" ry="1.7" fill="#2a86a4" opacity="0.49" transform="rotate(-5 146 140)"/><ellipse cx="158" cy="112" rx="6.5" ry="1.1" fill="#0a2840" opacity="0.39" transform="rotate(4 158 112)"/><ellipse cx="59" cy="100" rx="3.1" ry="0.9" fill="#3a98b4" opacity="0.70" transform="rotate(-5 59 100)"/><ellipse cx="88" cy="120" rx="4.9" ry="1.3" fill="#8cc4d4" opacity="0.41" transform="rotate(3 88 120)"/><ellipse cx="26" cy="136" rx="11.5" ry="1.6" fill="#2a86a4" opacity="0.35" transform="rotate(-1 26 136)"/><ellipse cx="15" cy="130" rx="8.8" ry="1.5" fill="#0b2f4a" opacity="0.79" transform="rotate(2 15 130)"/><ellipse cx="254" cy="146" rx="11.3" ry="1.8" fill="#0b2f4a" opacity="0.46" transform="rotate(-0 254 146)"/><ellipse cx="88" cy="164" rx="9.8" ry="2.2" fill="#6fb0c4" opacity="0.45" transform="rotate(-4 88 164)"/><ellipse cx="259" cy="135" rx="11.2" ry="1.6" fill="#3a98b4" opacity="0.43" transform="rotate(4 259 135)"/><ellipse cx="48" cy="165" rx="10.3" ry="2.2" fill="#0a2840" opacity="0.51" transform="rotate(-4 48 165)"/><ellipse cx="34" cy="132" rx="5.6" ry="1.5" fill="#0a2840" opacity="0.69" transform="rotate(-0 34 132)"/><ellipse cx="159" cy="127" rx="5.1" ry="1.4" fill="#0a2840" opacity="0.37" transform="rotate(-3 159 127)"/><ellipse cx="158" cy="166" rx="12.4" ry="2.2" fill="#3a98b4" opacity="0.77" transform="rotate(3 158 166)"/><ellipse cx="87" cy="109" rx="3.6" ry="1.1" fill="#a8d4e0" opacity="0.41" transform="rotate(-3 87 109)"/><ellipse cx="22" cy="157" rx="17.5" ry="2.0" fill="#a8d4e0" opacity="0.39" transform="rotate(5 22 157)"/><ellipse cx="198" cy="113" rx="6.6" ry="1.2" fill="#0a2840" opacity="0.62" transform="rotate(-0 198 113)"/><ellipse cx="129" cy="102" rx="3.0" ry="0.9" fill="#0a2840" opacity="0.54" transform="rotate(1 129 102)"/><ellipse cx="181" cy="97" rx="3.4" ry="0.8" fill="#3a98b4" opacity="0.52" transform="rotate(5 181 97)"/><ellipse cx="134" cy="156" rx="10.5" ry="2.0" fill="#0f4460" opacity="0.45" transform="rotate(-2 134 156)"/><ellipse cx="48" cy="115" rx="3.2" ry="1.2" fill="#0a2840" opacity="0.60" transform="rotate(4 48 115)"/><ellipse cx="70" cy="168" rx="14.8" ry="2.3" fill="#8cc4d4" opacity="0.60" transform="rotate(-2 70 168)"/><ellipse cx="199" cy="96" rx="3.9" ry="0.8" fill="#1f7494" opacity="0.39" transform="rotate(-1 199 96)"/><ellipse cx="6" cy="119" rx="6.1" ry="1.3" fill="#0a2840" opacity="0.67" transform="rotate(-3 6 119)"/><ellipse cx="45" cy="164" rx="15.6" ry="2.2" fill="#0d3a55" opacity="0.58" transform="rotate(3 45 164)"/><ellipse cx="207" cy="162" rx="11.5" ry="2.1" fill="#0f4460" opacity="0.36" transform="rotate(-1 207 162)"/><ellipse cx="7" cy="117" rx="6.1" ry="1.2" fill="#0a2840" opacity="0.73" transform="rotate(-2 7 117)"/><ellipse cx="229" cy="146" rx="5.1" ry="1.8" fill="#0f4460" opacity="0.60" transform="rotate(-3 229 146)"/><ellipse cx="40" cy="142" rx="9.2" ry="1.7" fill="#1f7494" opacity="0.36" transform="rotate(2 40 142)"/><ellipse cx="10" cy="104" rx="2.6" ry="1.0" fill="#3a98b4" opacity="0.54" transform="rotate(-3 10 104)"/><ellipse cx="228" cy="156" rx="9.6" ry="2.0" fill="#8cc4d4" opacity="0.66" transform="rotate(-3 228 156)"/><ellipse cx="118" cy="128" rx="3.6" ry="1.4" fill="#1f7494" opacity="0.45" transform="rotate(2 118 128)"/><ellipse cx="-10" cy="106" rx="5.9" ry="1.0" fill="#0d3a55" opacity="0.60" transform="rotate(4 -10 106)"/><ellipse cx="11" cy="150" rx="14.3" ry="1.9" fill="#6fb0c4" opacity="0.79" transform="rotate(-2 11 150)"/><ellipse cx="229" cy="115" rx="5.2" ry="1.2" fill="#3a98b4" opacity="0.53" transform="rotate(-4 229 115)"/><ellipse cx="33" cy="102" rx="4.2" ry="0.9" fill="#3a98b4" opacity="0.48" transform="rotate(-1 33 102)"/><ellipse cx="170" cy="117" rx="6.8" ry="1.2" fill="#1f7494" opacity="0.50" transform="rotate(-4 170 117)"/><ellipse cx="24" cy="129" rx="4.1" ry="1.5" fill="#0b2f4a" opacity="0.75" transform="rotate(-2 24 129)"/><ellipse cx="128" cy="157" rx="13.5" ry="2.0" fill="#0a2840" opacity="0.74" transform="rotate(-5 128 157)"/><ellipse cx="127" cy="107" rx="7.8" ry="1.0" fill="#0f4460" opacity="0.52" transform="rotate(2 127 107)"/><ellipse cx="221" cy="101" rx="3.4" ry="0.9" fill="#2a86a4" opacity="0.61" transform="rotate(-1 221 101)"/><ellipse cx="158" cy="145" rx="13.7" ry="1.8" fill="#b0a090" opacity="0.65" transform="rotate(-3 158 145)"/><ellipse cx="-6" cy="102" rx="5.7" ry="0.9" fill="#8cc4d4" opacity="0.47" transform="rotate(-3 -6 102)"/><ellipse cx="170" cy="107" rx="5.0" ry="1.0" fill="#2a86a4" opacity="0.37" transform="rotate(3 170 107)"/><ellipse cx="1" cy="96" rx="3.5" ry="0.8" fill="#2a86a4" opacity="0.53" transform="rotate(5 1 96)"/><ellipse cx="221" cy="156" rx="6.9" ry="2.0" fill="#0a2840" opacity="0.73" transform="rotate(-3 221 156)"/><ellipse cx="157" cy="119" rx="9.2" ry="1.3" fill="#a8d4e0" opacity="0.45" transform="rotate(-3 157 119)"/><ellipse cx="109" cy="159" rx="15.7" ry="2.1" fill="#1f7494" opacity="0.75" transform="rotate(-1 109 159)"/><ellipse cx="229" cy="99" rx="3.6" ry="0.9" fill="#1f7494" opacity="0.63" transform="rotate(-3 229 99)"/><ellipse cx="120" cy="105" rx="4.7" ry="1.0" fill="#0b2f4a" opacity="0.42" transform="rotate(-6 120 105)"/><ellipse cx="171" cy="150" rx="4.5" ry="1.9" fill="#0d3a55" opacity="0.44" transform="rotate(4 171 150)"/><ellipse cx="102" cy="127" rx="10.7" ry="1.4" fill="#0b2f4a" opacity="0.45" transform="rotate(1 102 127)"/><ellipse cx="58" cy="155" rx="7.1" ry="2.0" fill="#0d3a55" opacity="0.80" transform="rotate(-1 58 155)"/><ellipse cx="186" cy="156" rx="7.0" ry="2.0" fill="#0d3a55" opacity="0.65" transform="rotate(-3 186 156)"/><ellipse cx="140" cy="88" rx="1.9" ry="0.6" fill="#0d3a55" opacity="0.38" transform="rotate(-2 140 88)"/><ellipse cx="62" cy="150" rx="7.4" ry="1.9" fill="#a8d4e0" opacity="0.53" transform="rotate(4 62 150)"/><ellipse cx="197" cy="156" rx="17.2" ry="2.0" fill="#0a2840" opacity="0.67" transform="rotate(-3 197 156)"/><ellipse cx="-4" cy="162" rx="12.8" ry="2.1" fill="#0a2840" opacity="0.68" transform="rotate(0 -4 162)"/><ellipse cx="258" cy="109" rx="6.9" ry="1.1" fill="#0f4460" opacity="0.48" transform="rotate(5 258 109)"/><ellipse cx="15" cy="113" rx="5.2" ry="1.1" fill="#2a86a4" opacity="0.37" transform="rotate(-4 15 113)"/><ellipse cx="46" cy="112" rx="5.2" ry="1.1" fill="#0f4460" opacity="0.51" transform="rotate(-1 46 112)"/><ellipse cx="126" cy="87" rx="3.2" ry="0.6" fill="#0d3a55" opacity="0.36" transform="rotate(-4 126 87)"/><ellipse cx="149" cy="92" rx="4.5" ry="0.7" fill="#0a2840" opacity="0.78" transform="rotate(-3 149 92)"/><ellipse cx="181" cy="120" rx="4.6" ry="1.3" fill="#0a2840" opacity="0.50" transform="rotate(-4 181 120)"/>
<path d="M109 87 q2 12 14 17 q50 12 127 6 v9 q-70 6 -120 -4 q-20 -5 -21 -28z" fill="#15171c"/>
<rect x="143" y="84" width="6" height="14" fill="#f1f1f1"/><rect x="150" y="92" width="8" height="12" rx="3" fill="#b9b34a"/><rect x="162" y="92" width="8" height="13" rx="3" fill="#3a2c28"/><rect x="173" y="91" width="10" height="14" rx="4" fill="#b85a5a"/><rect x="186" y="94" width="9" height="12" rx="3" fill="#9cc0dc"/><rect x="197" y="95" width="7" height="11" rx="3" fill="#c9483a"/><rect x="204" y="96" width="7" height="10" rx="3" fill="#e4e0d8"/><rect x="212" y="97" width="6" height="10" rx="3" fill="#d8503a"/>
<rect x="217" y="78" width="7" height="12" fill="#7a7a80"/><rect x="217.500" y="90" width="6.500" height="16" fill="#26262c"/><circle cx="220" cy="75" r="2.500" fill="#b0785a"/>
<line x1="117" y1="106" x2="138" y2="90" stroke="#c9a050" stroke-width="1.600"/>
<path d="M95 120 l14 7 l3 1 l8 -6 l-6 8 l-8 -1z" fill="#5a5a58"/>
</g></svg>
<svg style="left:30.2px;top:491.8px" width="12" height="12" viewBox="0 0 24 24"><path d="M1 21h4V9H1v12zm22-11c0-1.1-.9-2-2-2h-6.31l.95-4.57.03-.32c0-.41-.17-.79-.44-1.060L14.170 1 7.590 7.590C7.220 7.950 7 8.450 7 9v10c0 1.100.9 2 2 2h9c.83 0 1.540-.5 1.840-1.220l3.020-7.050c.09-.23.14-.47.14-.73v-2z" fill="#c0201c" /></svg>
<div class="t" style="left:46.5px;top:492.2px;font-size:12.5px;font-weight:400;color:#55555c;letter-spacing:0.22px;">29k</div>
<svg style="left:92.3px;top:492.4px" width="12.5" height="12.5" viewBox="0 0 24 24"><path d="M20 17.170L18.830 16H4V4h16v13.170zM20 2H4c-1.100 0-2 .9-2 2v12c0 1.100.9 2 2 2h14l4 4V4c0-1.100-.9-2-2-2z" fill="#44444c" /></svg>
<div class="t" style="left:108.4px;top:492.2px;font-size:12.5px;font-weight:400;color:#55555c;letter-spacing:0.27px;">853</div>
<svg style="left:155.3px;top:492.0px" width="12" height="12" viewBox="0 0 24 24"><path d="M12 2C6.480 2 2 6.480 2 12s4.480 10 10 10 10-4.480 10-10S17.520 2 12 2zm-2 15l-5-5 1.410-1.410L10 14.170l7.590-7.590L19 8l-9 9z" fill="#33333a" /></svg>
<div class="t" style="left:171.5px;top:492.2px;font-size:12.5px;font-weight:400;color:#55555c;letter-spacing:0.17px;">42k</div>
<svg style="left:219.1px;top:491.8px" width="12.5" height="12.5" viewBox="0 0 24 24"><path d="M15 5l-1.410 1.410L18.170 11H2v2h16.170l-4.590 4.590L15 19l7-7-7-7z" fill="#44444c" /></svg>
<div class="t" style="left:235.0px;top:492.2px;font-size:12.5px;font-weight:400;color:#55555c;letter-spacing:0.00px;transform:scaleX(0.887);transform-origin:0 0;">124</div>
<div class="b" style="left:17px;top:529px;width:250px;height:2px;background:#c1c0c9;border-radius:0px;"></div>
<div class="b" style="left:21.0px;top:531.3px;width:41.0px;height:41.0px;background:#2a2944;border-radius:20.5px;"></div><div class="t" style="left:37.0px;top:545.3px;font-size:4.0px;font-weight:700;color:#e8e8f0;letter-spacing:0.50px;">THE</div><div class="b" style="left:28.6px;top:549.6999999999999px;width:25.799999999999997px;height:9.600000000000023px;background:#d0252b;border-radius:0.5px;"></div><div class="t" style="left:30.6px;top:551.4px;font-size:7.0px;font-weight:700;color:#fff;letter-spacing:0.27px;">NEWS</div>
<div class="t" style="left:70.0px;top:538.7px;font-size:11px;font-weight:400;color:#2a2a30;letter-spacing:0.07px;-webkit-text-stroke:0.25px #2a2a30;">News App</div>
<div class="t" style="left:70.0px;top:553.9px;font-size:10.5px;font-weight:400;color:#707078;letter-spacing:0.00px;transform:scaleX(0.932);transform-origin:0 0;">Sep 17, 2025</div>
<svg style="left:238.0px;top:546.4px" width="10" height="10" viewBox="0 0 24 24"><path d="M12 8c1.1 0 2-.9 2-2s-.9-2-2-2-2 .9-2 2 .9 2 2 2zm0 2c-1.1 0-2 .9-2 2s.9 2 2 2 2-.9 2-2-.9-2-2-2zm0 6c-1.1 0-2 .9-2 2s.9 2 2 2 2-.9 2-2-.9-2-2-2z" fill="#55555c" /></svg>
<svg style="left:17px;top:577px" width="250" height="91" viewBox="0 0 250 91" preserveAspectRatio="none">
<defs><linearGradient id="ms2" x1="0" y1="0" x2="0" y2="1"><stop offset="0" stop-color="#dde3ea"/><stop offset=".22" stop-color="#e6ebf1"/><stop offset=".45" stop-color="#dbe4ef"/><stop offset="1" stop-color="#c9d8ea"/></linearGradient>
<linearGradient id="mb2" gradientUnits="userSpaceOnUse" x1="0" y1="30" x2="0" y2="125"><stop offset="0" stop-color="#a9c0de"/><stop offset=".3" stop-color="#86a6cf"/><stop offset=".65" stop-color="#5b86c0"/><stop offset="1" stop-color="#4474b4"/></linearGradient>
<linearGradient id="mr2" gradientUnits="userSpaceOnUse" x1="0" y1="50" x2="0" y2="100"><stop offset="0" stop-color="#7f9cc4"/><stop offset="1" stop-color="#34609f"/></linearGradient>
<linearGradient id="mw2" gradientUnits="userSpaceOnUse" x1="0" y1="48" x2="0" y2="125"><stop offset="0" stop-color="#d3e1f3"/><stop offset=".4" stop-color="#a9c4e6"/><stop offset=".65" stop-color="#6c96cc"/><stop offset="1" stop-color="#7ea4d6"/></linearGradient>
<filter id="mf2" x="-10%" y="-30%" width="120%" height="160%"><feGaussianBlur stdDeviation="1.800"/></filter>
<filter id="mg2" x="-10%" y="-30%" width="120%" height="160%"><feGaussianBlur stdDeviation="0.600"/></filter>
<filter id="mh2" x="-10%" y="-30%" width="120%" height="160%"><feGaussianBlur stdDeviation="3.500"/></filter>
<clipPath id="mc2"><rect width="250" height="91"/></clipPath></defs>
<g clip-path="url(#mc2)">
<rect width="250" height="125" fill="url(#ms2)"/>
<rect x="180" y="0" width="80" height="60" fill="#cfd8e4" opacity=".6" filter="url(#mh2)"/>
<path d="M-6 41 Q10 38 25 35 Q43 30 60 35 Q80 41 103 42 Q125 40 140 34 Q160 28 180 29 Q200 31 205 37 Q198 43 206 46 Q216 47 214 54 Q205 60 215 66 L240 58 L256 56 V130 H-6z" fill="url(#mb2)" filter="url(#mf2)"/>
<path d="M112 44 Q140 36 170 36 Q192 38 196 44 Q180 50 150 52 Q125 54 112 50z" fill="#5f86bb" opacity=".75" filter="url(#mf2)"/>
<path d="M-4 50 Q15 44 34 46 Q20 56 -4 60z" fill="#c2d3ea" opacity=".8" filter="url(#mf2)"/>
<path d="M-2 61 L8 58 L18 59 L26 66 L34 70 L44 62 L52 54 L58 47 L62 44 L68 47 L76 50 L86 53 L94 56 L88 64 L84 74 L80 91 L70 110 L50 128 L-2 128z" fill="#3d669f" filter="url(#mg2)"/>
<path d="M40 68 L58 48 L62 45 L66 49 L56 66 L64 60 L76 51 L90 56 L74 64 L66 78 L54 80 L46 91 L30 91z" fill="#b7cde8" opacity=".7" filter="url(#mg2)"/>
<g filter="url(#mg2)"><line x1="59.3" y1="57.8" x2="57.9" y2="62.1" stroke="#d6e3f3" stroke-width="1.0" opacity="0.7"/><line x1="78.1" y1="57.9" x2="70.3" y2="75.4" stroke="#d6e3f3" stroke-width="1.4" opacity="0.7"/><line x1="47.2" y1="68.9" x2="48.8" y2="76.8" stroke="#d6e3f3" stroke-width="0.7" opacity="0.7"/><line x1="57.9" y1="59.4" x2="63.4" y2="68.4" stroke="#d6e3f3" stroke-width="0.6" opacity="0.7"/><line x1="68.2" y1="66.6" x2="75.1" y2="66.7" stroke="#d6e3f3" stroke-width="0.7" opacity="0.7"/><line x1="81.7" y1="63.4" x2="84.4" y2="76.1" stroke="#d6e3f3" stroke-width="0.9" opacity="0.7"/><line x1="63.1" y1="62.9" x2="67.5" y2="81.4" stroke="#d6e3f3" stroke-width="0.5" opacity="0.7"/><line x1="47.5" y1="67.0" x2="42.3" y2="83.4" stroke="#d6e3f3" stroke-width="0.8" opacity="0.7"/><line x1="80.3" y1="59.3" x2="86.7" y2="71.2" stroke="#d6e3f3" stroke-width="0.7" opacity="0.7"/><line x1="72.9" y1="59.9" x2="73.6" y2="72.9" stroke="#d6e3f3" stroke-width="1.1" opacity="0.7"/><line x1="56.3" y1="58.6" x2="60.0" y2="65.2" stroke="#d6e3f3" stroke-width="0.6" opacity="0.7"/><line x1="40.6" y1="72.3" x2="34.2" y2="89.3" stroke="#d6e3f3" stroke-width="0.6" opacity="0.7"/><line x1="64.8" y1="60.5" x2="68.8" y2="73.7" stroke="#d6e3f3" stroke-width="1.3" opacity="0.7"/><line x1="65.0" y1="47.4" x2="57.9" y2="65.3" stroke="#d6e3f3" stroke-width="1.1" opacity="0.7"/><line x1="62.4" y1="54.4" x2="59.6" y2="62.4" stroke="#d6e3f3" stroke-width="0.8" opacity="0.7"/><line x1="52.6" y1="58.8" x2="66.0" y2="65.0" stroke="#d6e3f3" stroke-width="0.5" opacity="0.7"/><line x1="54.1" y1="59.5" x2="65.4" y2="64.7" stroke="#d6e3f3" stroke-width="1.4" opacity="0.7"/><line x1="73.2" y1="55.0" x2="66.3" y2="73.3" stroke="#d6e3f3" stroke-width="0.9" opacity="0.7"/><line x1="81.4" y1="56.8" x2="77.7" y2="75.9" stroke="#d6e3f3" stroke-width="1.4" opacity="0.7"/><line x1="67.8" y1="61.9" x2="66.1" y2="72.9" stroke="#d6e3f3" stroke-width="0.8" opacity="0.7"/><line x1="66.1" y1="55.3" x2="70.4" y2="66.8" stroke="#d6e3f3" stroke-width="1.0" opacity="0.7"/><line x1="59.1" y1="52.1" x2="59.5" y2="62.4" stroke="#d6e3f3" stroke-width="0.8" opacity="0.7"/><line x1="71.7" y1="57.9" x2="73.6" y2="63.6" stroke="#d6e3f3" stroke-width="0.5" opacity="0.7"/><line x1="61.0" y1="52.0" x2="71.1" y2="53.3" stroke="#d6e3f3" stroke-width="0.8" opacity="0.7"/><line x1="78.5" y1="59.0" x2="76.4" y2="67.8" stroke="#d6e3f3" stroke-width="1.0" opacity="0.7"/><line x1="72.5" y1="59.8" x2="75.7" y2="59.7" stroke="#d6e3f3" stroke-width="1.1" opacity="0.7"/><line x1="58.4" y1="55.9" x2="52.2" y2="63.6" stroke="#23406c" stroke-width="0.7" opacity="0.65"/><line x1="48.8" y1="69.6" x2="51.0" y2="69.6" stroke="#23406c" stroke-width="1.1" opacity="0.65"/><line x1="53.4" y1="56.7" x2="54.8" y2="73.7" stroke="#23406c" stroke-width="1.1" opacity="0.65"/><line x1="77.0" y1="60.2" x2="79.0" y2="65.6" stroke="#23406c" stroke-width="0.7" opacity="0.65"/><line x1="74.9" y1="62.7" x2="78.7" y2="75.2" stroke="#23406c" stroke-width="1.2" opacity="0.65"/><line x1="59.0" y1="49.3" x2="68.1" y2="58.5" stroke="#23406c" stroke-width="1.2" opacity="0.65"/><line x1="68.3" y1="56.5" x2="69.3" y2="68.1" stroke="#23406c" stroke-width="0.5" opacity="0.65"/><line x1="51.5" y1="69.0" x2="41.1" y2="68.1" stroke="#23406c" stroke-width="1.4" opacity="0.65"/><line x1="49.7" y1="62.3" x2="49.2" y2="83.8" stroke="#23406c" stroke-width="0.9" opacity="0.65"/><line x1="70.3" y1="62.7" x2="75.3" y2="74.3" stroke="#23406c" stroke-width="0.7" opacity="0.65"/><line x1="59.0" y1="49.0" x2="69.2" y2="68.5" stroke="#23406c" stroke-width="0.5" opacity="0.65"/><line x1="75.2" y1="67.2" x2="75.9" y2="80.8" stroke="#23406c" stroke-width="1.0" opacity="0.65"/><line x1="62.0" y1="48.9" x2="61.6" y2="54.9" stroke="#23406c" stroke-width="0.5" opacity="0.65"/><line x1="80.9" y1="58.7" x2="78.3" y2="77.0" stroke="#23406c" stroke-width="0.7" opacity="0.65"/><line x1="68.5" y1="61.8" x2="72.8" y2="79.0" stroke="#23406c" stroke-width="0.6" opacity="0.65"/><line x1="70.2" y1="67.1" x2="64.4" y2="69.8" stroke="#23406c" stroke-width="0.6" opacity="0.65"/><line x1="61.2" y1="53.1" x2="61.8" y2="62.1" stroke="#23406c" stroke-width="0.7" opacity="0.65"/><line x1="79.8" y1="62.2" x2="80.5" y2="68.8" stroke="#23406c" stroke-width="0.5" opacity="0.65"/><line x1="58.4" y1="50.9" x2="67.5" y2="53.7" stroke="#23406c" stroke-width="0.5" opacity="0.65"/><line x1="58.5" y1="68.5" x2="51.7" y2="80.0" stroke="#23406c" stroke-width="0.8" opacity="0.65"/><line x1="58.1" y1="73.9" x2="57.8" y2="76.9" stroke="#23406c" stroke-width="0.9" opacity="0.65"/><line x1="55.0" y1="54.6" x2="57.1" y2="71.5" stroke="#23406c" stroke-width="0.7" opacity="0.65"/></g>
<path d="M-2 66 L8 60 L20 64 L28 78 L36 92 L48 108 L56 128 L-2 128z" fill="#2f568f" filter="url(#mg2)"/><g filter="url(#mg2)"><line x1="11.4" y1="60.5" x2="13.2" y2="71.0" stroke="#b9cde6" stroke-width="1.1" opacity="0.5"/><line x1="35.1" y1="104.8" x2="37.1" y2="119.2" stroke="#b9cde6" stroke-width="0.7" opacity="0.5"/><line x1="8.0" y1="64.0" x2="15.5" y2="68.7" stroke="#b9cde6" stroke-width="1.2" opacity="0.5"/><line x1="19.6" y1="72.5" x2="27.5" y2="87.1" stroke="#b9cde6" stroke-width="0.6" opacity="0.5"/><line x1="2.2" y1="70.8" x2="10.9" y2="77.8" stroke="#b9cde6" stroke-width="0.6" opacity="0.5"/><line x1="37.6" y1="108.5" x2="44.2" y2="111.8" stroke="#b9cde6" stroke-width="1.1" opacity="0.5"/><line x1="4.7" y1="71.2" x2="10.3" y2="88.0" stroke="#b9cde6" stroke-width="0.9" opacity="0.5"/><line x1="11.4" y1="66.9" x2="14.9" y2="68.7" stroke="#b9cde6" stroke-width="0.8" opacity="0.5"/><line x1="23.1" y1="73.6" x2="10.6" y2="84.9" stroke="#b9cde6" stroke-width="0.8" opacity="0.5"/><line x1="10.0" y1="94.2" x2="18.1" y2="101.0" stroke="#b9cde6" stroke-width="1.1" opacity="0.5"/><line x1="33.5" y1="109.1" x2="39.4" y2="110.5" stroke="#b9cde6" stroke-width="0.6" opacity="0.5"/><line x1="36.2" y1="107.7" x2="39.2" y2="117.9" stroke="#b9cde6" stroke-width="0.7" opacity="0.5"/><line x1="13.4" y1="97.6" x2="4.2" y2="109.0" stroke="#b9cde6" stroke-width="0.6" opacity="0.5"/><line x1="17.1" y1="72.3" x2="29.2" y2="86.3" stroke="#b9cde6" stroke-width="1.1" opacity="0.5"/></g>
<path d="M152 70 L160 66 L171 57 L180 62 L192 67 L206 72 L198 80 L192 92 L210 96 L240 98 L256 104 V122 L210 126 L176 120 L166 100 L166 78z" fill="#325a92" filter="url(#mg2)"/>
<path d="M166 78 L176 64 L190 70 L182 80 L180 91 L172 91z" fill="#a9c0de" opacity=".6" filter="url(#mg2)"/>
<g filter="url(#mg2)"><line x1="186.3" y1="73.1" x2="185.2" y2="84.4" stroke="#c4d5ea" stroke-width="0.5" opacity="0.6"/><line x1="170.1" y1="70.5" x2="159.1" y2="84.0" stroke="#c4d5ea" stroke-width="1.4" opacity="0.6"/><line x1="168.3" y1="73.6" x2="167.2" y2="77.9" stroke="#c4d5ea" stroke-width="0.6" opacity="0.6"/><line x1="164.2" y1="70.6" x2="162.5" y2="76.1" stroke="#c4d5ea" stroke-width="1.4" opacity="0.6"/><line x1="191.7" y1="73.0" x2="197.8" y2="82.2" stroke="#c4d5ea" stroke-width="1.2" opacity="0.6"/><line x1="193.9" y1="76.5" x2="197.8" y2="88.7" stroke="#c4d5ea" stroke-width="0.6" opacity="0.6"/><line x1="189.9" y1="75.1" x2="196.3" y2="85.6" stroke="#c4d5ea" stroke-width="1.0" opacity="0.6"/><line x1="189.4" y1="72.2" x2="184.0" y2="92.1" stroke="#c4d5ea" stroke-width="1.3" opacity="0.6"/><line x1="170.9" y1="65.6" x2="161.5" y2="67.8" stroke="#c4d5ea" stroke-width="0.8" opacity="0.6"/><line x1="188.1" y1="72.1" x2="192.0" y2="74.6" stroke="#c4d5ea" stroke-width="1.1" opacity="0.6"/><line x1="171.4" y1="64.4" x2="172.1" y2="67.6" stroke="#c4d5ea" stroke-width="1.3" opacity="0.6"/><line x1="175.4" y1="66.0" x2="184.6" y2="73.9" stroke="#c4d5ea" stroke-width="1.1" opacity="0.6"/><line x1="171.5" y1="72.5" x2="163.1" y2="83.6" stroke="#c4d5ea" stroke-width="1.4" opacity="0.6"/><line x1="167.3" y1="74.0" x2="168.0" y2="89.6" stroke="#c4d5ea" stroke-width="0.6" opacity="0.6"/><line x1="233.1" y1="107.3" x2="223.1" y2="118.4" stroke="#23406c" stroke-width="0.9" opacity="0.65"/><line x1="229.5" y1="111.8" x2="238.3" y2="120.3" stroke="#23406c" stroke-width="0.7" opacity="0.65"/><line x1="192.1" y1="79.5" x2="197.0" y2="80.3" stroke="#23406c" stroke-width="1.3" opacity="0.65"/><line x1="192.8" y1="76.7" x2="195.4" y2="91.7" stroke="#23406c" stroke-width="1.4" opacity="0.65"/><line x1="170.4" y1="69.6" x2="164.1" y2="78.3" stroke="#23406c" stroke-width="1.0" opacity="0.65"/><line x1="165.1" y1="75.9" x2="164.4" y2="86.4" stroke="#23406c" stroke-width="0.9" opacity="0.65"/><line x1="170.6" y1="72.5" x2="167.4" y2="87.4" stroke="#23406c" stroke-width="0.9" opacity="0.65"/><line x1="179.9" y1="71.7" x2="185.1" y2="76.4" stroke="#23406c" stroke-width="0.9" opacity="0.65"/><line x1="170.2" y1="68.6" x2="175.8" y2="84.4" stroke="#23406c" stroke-width="0.7" opacity="0.65"/><line x1="190.1" y1="73.5" x2="186.8" y2="81.0" stroke="#23406c" stroke-width="1.1" opacity="0.65"/><line x1="173.9" y1="62.5" x2="179.0" y2="70.1" stroke="#23406c" stroke-width="0.9" opacity="0.65"/><line x1="181.3" y1="64.3" x2="170.4" y2="74.2" stroke="#23406c" stroke-width="0.9" opacity="0.65"/><line x1="199.5" y1="103.9" x2="190.1" y2="111.4" stroke="#23406c" stroke-width="0.7" opacity="0.65"/><line x1="227.0" y1="108.2" x2="227.8" y2="120.7" stroke="#23406c" stroke-width="1.1" opacity="0.65"/><line x1="176.0" y1="68.2" x2="176.8" y2="78.4" stroke="#23406c" stroke-width="1.1" opacity="0.65"/><line x1="201.4" y1="105.2" x2="205.1" y2="110.7" stroke="#23406c" stroke-width="1.2" opacity="0.65"/><line x1="190.7" y1="76.5" x2="184.1" y2="93.1" stroke="#23406c" stroke-width="1.0" opacity="0.65"/><line x1="228.4" y1="111.8" x2="230.2" y2="113.0" stroke="#23406c" stroke-width="1.2" opacity="0.65"/><line x1="187.2" y1="69.0" x2="179.6" y2="88.2" stroke="#23406c" stroke-width="1.3" opacity="0.65"/><line x1="187.2" y1="71.4" x2="194.4" y2="84.3" stroke="#23406c" stroke-width="0.8" opacity="0.65"/></g>
<path d="M52 130 Q62 100 80 88 Q86 68 100 58 Q118 48 140 50 Q158 54 164 70 Q170 84 178 100 Q186 116 190 130z" fill="url(#mw2)" opacity=".95" filter="url(#mf2)"/>
<path d="M70 130 Q76 108 96 100 Q112 92 124 104 Q140 96 152 108 Q160 118 164 130z" fill="#9dbce4" opacity=".8" filter="url(#mf2)"/>
<path d="M22 95 Q28 82 40 80 Q52 82 58 95z" fill="#c3d6ee" opacity=".8" filter="url(#mf2)"/>
<path d="M200 100 Q204 74 216 66 Q224 54 236 52 Q246 52 256 60 V100z" fill="url(#mr2)" filter="url(#mf2)"/>
<path d="M186 95 Q196 78 212 80 Q220 86 224 95z" fill="#b3c9e6" opacity=".75" filter="url(#mf2)"/>
<path d="M186 130 Q196 114 216 112 Q236 108 256 112 V130z" fill="#a9c6ea" opacity=".9" filter="url(#mf2)"/>
<rect x="-5" y="85" width="260" height="9" fill="#3b6cb2" opacity=".55" filter="url(#mf2)"/>
</g></svg>
<svg style="left:66.3px;top:675.7px" width="15" height="15" viewBox="0 0 24 24"><path d="M6.18 15.64a2.18 2.18 0 1 0 0 4.36 2.18 2.18 0 1 0 0-4.36zM4 4.44v2.83c7.03 0 12.73 5.7 12.73 12.73h2.83c0-8.59-6.97-15.56-15.56-15.56zm0 5.66v2.83c3.9 0 7.07 3.17 7.07 7.07h2.83c0-5.47-4.43-9.9-9.9-9.9z" fill="#6b68b8" /></svg>
<div class="t" style="left:59.4px;top:692.1px;font-size:10.5px;font-weight:400;color:#6b68b8;letter-spacing:-0.10px;">Feeds</div>
<svg style="left:203.7px;top:676.0px" width="14" height="14" viewBox="0 0 24 24"><path d="M19 9l1.250-2.750L23 5l-2.750-1.250L19 1l-1.250 2.750L15 5l2.750 1.250L19 9zm-7.500.5L9 4 6.500 9.500 1 12l5.500 2.500L9 20l2.500-5.500L17 12l-5.500-2.500zM19 15l-1.250 2.750L15 19l2.750 1.250L19 23l1.250-2.750L23 19l-2.750-1.250L19 15z" fill="#2a2a30" /></svg>
<div class="t" style="left:195.0px;top:692.1px;font-size:10.5px;font-weight:400;color:#44444c;letter-spacing:-0.04px;">Events</div>
<svg style="left:333.8px;top:223.1px" width="23" height="23" viewBox="0 0 24 24"><path d="M16.61 15.15C16.15 15.15 15.77 14.78 15.77 14.32S16.15 13.5 16.61 13.5H16.61C17.07 13.5 17.45 13.86 17.45 14.32C17.45 14.78 17.07 15.15 16.61 15.15M7.41 15.15C6.95 15.15 6.57 14.78 6.57 14.32C6.57 13.86 6.95 13.5 7.41 13.5H7.41C7.87 13.5 8.24 13.86 8.24 14.32C8.24 14.78 7.87 15.15 7.41 15.15M16.91 10.14L18.58 7.26C18.67 7.09 18.61 6.88 18.45 6.79C18.28 6.69 18.07 6.75 18 6.92L16.29 9.83C14.95 9.22 13.5 8.9 12 8.91C10.47 8.91 9 9.24 7.73 9.82L6.04 6.91C5.95 6.74 5.74 6.68 5.57 6.78C5.4 6.87 5.35 7.08 5.44 7.25L7.1 10.13C4.25 11.69 2.29 14.58 2 18H22C21.72 14.59 19.77 11.7 16.91 10.14H16.91Z" fill="#3dbb85" /></svg>
<svg style="left:453.5px;top:227.3px" width="17" height="17" viewBox="0 0 24 24"><path d="M18.71,19.5C17.88,20.74 17,21.95 15.66,21.97C14.32,22 13.89,21.18 12.37,21.18C10.84,21.18 10.37,21.95 9.1,22C7.79,22.05 6.8,20.68 5.96,19.47C4.25,17 2.94,12.45 4.7,9.39C5.57,7.87 7.13,6.91 8.82,6.88C10.1,6.86 11.32,7.75 12.11,7.75C12.89,7.75 14.37,6.68 15.92,6.84C16.57,6.87 18.39,7.1 19.56,8.82C19.47,8.88 17.39,10.1 17.41,12.63C17.44,15.65 20.06,16.66 20.09,16.67C20.06,16.74 19.67,18.11 18.71,19.5M13,3.5C13.73,2.67 14.94,2.04 15.94,2C16.07,3.17 15.6,4.35 14.9,5.19C14.21,6.04 13.07,6.7 11.95,6.61C11.8,5.46 12.36,4.26 13,3.5Z" fill="#2a2a30" /></svg>
<div class="b" style="left:936px;top:218.5px;width:36.60000000000002px;height:36.599999999999994px;background:#fefdff;border-radius:18.3px;"></div>
<svg style="left:944.8px;top:227.2px" width="19.3" height="19.3" viewBox="0 0 24 24"><path d="M19.140 12.940c.04-.3.06-.61.06-.94 0-.32-.02-.64-.07-.94l2.030-1.580c.18-.14.23-.41.12-.61l-1.920-3.320c-.12-.22-.37-.29-.59-.22l-2.390.96c-.5-.38-1.030-.7-1.620-.94l-.36-2.540c-.04-.24-.24-.41-.48-.41h-3.840c-.24 0-.43.17-.47.41l-.36 2.540c-.59.24-1.130.57-1.620.94l-2.390-.96c-.22-.08-.47 0-.59.22L2.740 8.870c-.12.21-.08.47.12.61l2.030 1.580c-.05.3-.09.63-.09.94s.02.64.07.94l-2.030 1.580c-.18.14-.23.41-.12.61l1.920 3.320c.12.22.37.29.59.22l2.390-.96c.5.38 1.030.7 1.620.94l.36 2.540c.05.24.24.41.48.41h3.840c.24 0 .44-.17.47-.41l.36-2.540c.59-.24 1.130-.56 1.620-.94l2.390.96c.22.08.47 0 .59-.22l1.920-3.320c.12-.22.07-.47-.12-.61l-2.010-1.580zM12 15.600c-1.980 0-3.600-1.620-3.600-3.600s1.620-3.600 3.600-3.600 3.600 1.620 3.600 3.600-1.620 3.600-3.600 3.600z" fill="#34343a" /></svg>
<div class="b" style="left:465px;top:296px;width:125px;height:66px;background:#faf8fd;border-radius:0px;border-radius:18px 18px 0 0;"></div>
<div class="b" style="left:594px;top:296px;width:125px;height:65px;background:#e9e8ed;border-radius:0px;border-radius:18px 18px 0 0;"></div>
<div class="b" style="left:336px;top:360px;width:664px;height:284px;background:transparent;border-radius:0px;border:1px solid #c6c6cc;border-radius:0 0 0 18px;border-right:none;"></div>
<div class="b" style="left:336px;top:296px;width:124px;height:66px;background:#faf8fd;border-radius:1.5px;border:3px solid #e60a0a;"></div>
<div class="b" style="left:375px;top:305.5px;width:48px;height:24.0px;background:#e0dff8;border-radius:12px;"></div>
<svg style="left:391.4px;top:309.6px" width="15.5" height="15.5" viewBox="0 0 24 24"><path d="M6.18 15.64a2.18 2.18 0 1 0 0 4.36 2.18 2.18 0 1 0 0-4.36zM4 4.44v2.83c7.03 0 12.73 5.7 12.73 12.73h2.83c0-8.59-6.97-15.56-15.56-15.56zm0 5.66v2.83c3.9 0 7.07 3.17 7.07 7.07h2.83c0-5.47-4.43-9.9-9.9-9.9z" fill="#1c1c20" /></svg>
<div class="t" style="left:379.4px;top:335.5px;font-size:13.5px;font-weight:700;color:#1c1c20;letter-spacing:-0.18px;">Feeds</div>
<svg style="left:518.5px;top:308.0px" width="18" height="18" viewBox="0 0 24 24"><path d="M19 9l1.250-2.750L23 5l-2.750-1.250L19 1l-1.250 2.750L15 5l2.750 1.250L19 9zm-7.500.5L9 4 6.500 9.500 1 12l5.500 2.500L9 20l2.500-5.500L17 12l-5.500-2.500zM19 15l-1.250 2.750L15 19l2.750 1.250L19 23l1.250-2.750L23 19l-2.750-1.250L19 15z" fill="#2a2a30" /></svg>
<div class="t" style="left:506.7px;top:335.5px;font-size:13.5px;font-weight:400;color:#55555c;letter-spacing:0.01px;">Events</div>
<svg style="left:648.5px;top:308.9px" width="15" height="15" viewBox="0 0 24 24"><path d="M19 13h-6v6h-2v-6H5v-2h6V5h2v6h6v2z" fill="#3a4560" /></svg>
<div class="t" style="left:628.6px;top:334.6px;font-size:13.5px;font-weight:400;color:#55555c;letter-spacing:0.42px;">New Tab</div>
<div class="b" style="left:349px;top:377px;width:137px;height:250px;background:#faf8fd;border-radius:7px;border:1px solid #d8d7de;box-shadow:0 1px 3px rgba(0,0,0,.12);overflow:hidden;"></div>
<div class="b" style="left:353.8px;top:380.8px;width:22.0px;height:22.0px;background:#2a2944;border-radius:11px;"></div><div class="t" style="left:362.4px;top:388.3px;font-size:2.148px;font-weight:700;color:#e8e8f0;letter-spacing:0.27px;">THE</div><div class="b" style="left:357.8727px;top:390.6723px;width:13.854600000000005px;height:5.155199999999979px;background:#d0252b;border-radius:0.5px;"></div><div class="t" style="left:358.9px;top:391.6px;font-size:3.7590000000000003px;font-weight:700;color:#fff;letter-spacing:0.14px;">NEWS</div>
<div class="t" style="left:383.8px;top:384.6px;font-size:5.8px;font-weight:400;color:#2a2a30;letter-spacing:-0.09px;-webkit-text-stroke:0.2px #2a2a30;">News App</div>
<div class="t" style="left:383.8px;top:393.0px;font-size:5.6px;font-weight:400;color:#707078;letter-spacing:0.00px;transform:scaleX(0.882);transform-origin:0 0;">Sep 17, 2025</div>
<svg style="left:467.6px;top:388.8px" width="5.5" height="5.5" viewBox="0 0 24 24"><path d="M12 8c1.1 0 2-.9 2-2s-.9-2-2-2-2 .9-2 2 .9 2 2 2zm0 2c-1.1 0-2 .9-2 2s.9 2 2 2 2-.9 2-2-.9-2-2-2zm0 6c-1.1 0-2 .9-2 2s.9 2 2 2 2-.9 2-2-.9-2-2-2z" fill="#55555c" /></svg>
<svg style="left:350px;top:406px" width="135.5" height="91" viewBox="0 0 250 168" preserveAspectRatio="none">
<defs><linearGradient id="vs3" x1="0" y1="0" x2="0" y2="1"><stop offset="0" stop-color="#398dcf"/><stop offset=".55" stop-color="#8fc8e8"/><stop offset="1" stop-color="#a8d4ec"/></linearGradient>
<linearGradient id="vw3" x1="0" y1="0" x2="0" y2="1"><stop offset="0" stop-color="#6aaec0"/><stop offset=".18" stop-color="#3a8ea8"/><stop offset=".5" stop-color="#1f6e8c"/><stop offset="1" stop-color="#185a7a"/></linearGradient>
<clipPath id="vc3"><rect width="250" height="168"/></clipPath></defs>
<g clip-path="url(#vc3)">
<rect width="250" height="86" fill="url(#vs3)"/>
<rect x="0" y="46" width="11" height="34" fill="#f2efec"/>
<rect x="10" y="46" width="16" height="35" fill="#d09468"/>
<rect x="17" y="50" width="19" height="31" fill="#d8a283"/>
<rect x="34" y="42" width="26" height="40" fill="#cfb8aa"/><polygon points="32,44 60,40 60,45 32,48" fill="#c98558"/>
<rect x="59" y="32" width="68" height="52" fill="#f1f1ef"/><polygon points="59,33 85,27 127,31 127,36 59,36" fill="#ece8e2"/><polygon points="80,28 100,25 118,28 100,30" fill="#c9905e"/>
<rect x="124" y="38" width="35" height="47" fill="#cdb596"/><rect x="124" y="37" width="35" height="4" fill="#e8e4da"/>
<path d="M130 37 q4 -8 10 -4 q6 -7 12 -2 q5 -4 7 -1 v8 h-29z" fill="#3f5a38"/>
<polygon points="88,64 124,59 124,68 88,70" fill="#caa272"/><rect x="90" y="69" width="34" height="15" fill="#8f6848"/>
<polygon points="158,12 183,3 183,0 250,0 250,86 158,86" fill="#dedcd8"/>
<rect x="158" y="28" width="92" height="1.500" fill="#cfccc6"/><rect x="158" y="52" width="92" height="1.500" fill="#cfccc6"/>
<rect x="163" y="18" width="4" height="9" fill="#5a4a44"/><rect x="178" y="16" width="4" height="10" fill="#6a5a50"/><rect x="185" y="15" width="3" height="10" fill="#4a7088"/><rect x="191" y="14" width="3" height="10" fill="#4a7088"/><rect x="197" y="13" width="3" height="10" fill="#4a7088"/><rect x="203" y="12" width="3" height="10" fill="#4a7088"/><rect x="209" y="11" width="5" height="12" fill="#8a4a3a"/><rect x="228" y="8" width="6" height="14" fill="#7a4a3a"/><rect x="242" y="7" width="6" height="14" fill="#2a5aa0"/><rect x="162" y="40" width="3" height="10" fill="#6a6a6a"/><rect x="178" y="38" width="4" height="11" fill="#5a5a5a"/><rect x="186" y="36" width="4" height="12" fill="#6a7a80"/><rect x="193" y="35" width="6" height="14" fill="#f0f0f0"/><rect x="201" y="36" width="4" height="12" fill="#6a7a80"/><rect x="210" y="36" width="4" height="12" fill="#5a5a5a"/><rect x="229" y="34" width="5" height="12" fill="#6a6a6a"/><rect x="242" y="36" width="6" height="12" fill="#2a5aa0"/><rect x="162" y="60" width="3" height="9" fill="#6a6060"/><rect x="178" y="59" width="3" height="9" fill="#5a5050"/><rect x="185" y="59" width="3" height="9" fill="#5a5050"/><rect x="199" y="58" width="3" height="9" fill="#5a5050"/><rect x="207" y="58" width="4" height="9" fill="#4a4040"/><rect x="214" y="58" width="4" height="9" fill="#4a4040"/><rect x="226" y="58" width="4" height="9" fill="#4a4040"/><rect x="241" y="57" width="5" height="10" fill="#3a3a3a"/><rect x="162" y="73" width="3" height="8" fill="#6a6060"/><rect x="178" y="73" width="3" height="8" fill="#5a5050"/><rect x="185" y="73" width="3" height="8" fill="#5a5050"/><rect x="191" y="67" width="5" height="16" fill="#3a3030"/><rect x="199" y="73" width="3" height="8" fill="#5a5050"/><rect x="207" y="73" width="3" height="8" fill="#4a4040"/><rect x="226" y="73" width="3" height="8" fill="#4a4040"/><rect x="240" y="76" width="5" height="6" fill="#3a3a3a"/><rect x="64" y="37" width="2" height="5" fill="#9aa0a4"/><rect x="71" y="37" width="2" height="5" fill="#9aa0a4"/><rect x="78" y="37" width="2" height="5" fill="#9aa0a4"/><rect x="85" y="37" width="2" height="5" fill="#9aa0a4"/><rect x="92" y="37" width="2" height="5" fill="#9aa0a4"/><rect x="99" y="37" width="2" height="5" fill="#9aa0a4"/><rect x="106" y="37" width="2" height="5" fill="#9aa0a4"/><rect x="113" y="37" width="2" height="5" fill="#9aa0a4"/><rect x="120" y="37" width="2" height="5" fill="#9aa0a4"/><rect x="64" y="48" width="2" height="5" fill="#9aa0a4"/><rect x="71" y="48" width="2" height="5" fill="#9aa0a4"/><rect x="78" y="48" width="2" height="5" fill="#9aa0a4"/><rect x="85" y="48" width="2" height="5" fill="#9aa0a4"/><rect x="92" y="48" width="2" height="5" fill="#9aa0a4"/><rect x="99" y="48" width="2" height="5" fill="#9aa0a4"/><rect x="106" y="48" width="2" height="5" fill="#9aa0a4"/><rect x="113" y="48" width="2" height="5" fill="#9aa0a4"/><rect x="120" y="48" width="2" height="5" fill="#9aa0a4"/><rect x="64" y="59" width="2" height="5" fill="#9aa0a4"/><rect x="71" y="59" width="2" height="5" fill="#9aa0a4"/><rect x="78" y="59" width="2" height="5" fill="#9aa0a4"/><rect x="85" y="59" width="2" height="5" fill="#9aa0a4"/><rect x="92" y="59" width="2" height="5" fill="#9aa0a4"/><rect x="99" y="59" width="2" height="5" fill="#9aa0a4"/><rect x="106" y="59" width="2" height="5" fill="#9aa0a4"/><rect x="113" y="59" width="2" height="5" fill="#9aa0a4"/><rect x="120" y="59" width="2" height="5" fill="#9aa0a4"/><rect x="64" y="70" width="2" height="5" fill="#9aa0a4"/><rect x="71" y="70" width="2" height="5" fill="#9aa0a4"/><rect x="78" y="70" width="2" height="5" fill="#9aa0a4"/><rect x="85" y="70" width="2" height="5" fill="#9aa0a4"/><rect x="92" y="70" width="2" height="5" fill="#9aa0a4"/><rect x="99" y="70" width="2" height="5" fill="#9aa0a4"/><rect x="106" y="70" width="2" height="5" fill="#9aa0a4"/><rect x="113" y="70" width="2" height="5" fill="#9aa0a4"/><rect x="120" y="70" width="2" height="5" fill="#9aa0a4"/><rect x="128" y="47" width="2.500" height="6" fill="#6a5a48"/><rect x="134" y="47" width="2.500" height="6" fill="#6a5a48"/><rect x="140" y="47" width="2.500" height="6" fill="#6a5a48"/><rect x="146" y="47" width="2.500" height="6" fill="#6a5a48"/><rect x="152" y="47" width="2.500" height="6" fill="#6a5a48"/><rect x="128" y="58" width="2.500" height="6" fill="#6a5a48"/><rect x="134" y="58" width="2.500" height="6" fill="#6a5a48"/><rect x="140" y="58" width="2.500" height="6" fill="#6a5a48"/><rect x="146" y="58" width="2.500" height="6" fill="#6a5a48"/><rect x="152" y="58" width="2.500" height="6" fill="#6a5a48"/><rect x="128" y="69" width="2.500" height="6" fill="#6a5a48"/><rect x="134" y="69" width="2.500" height="6" fill="#6a5a48"/><rect x="140" y="69" width="2.500" height="6" fill="#6a5a48"/><rect x="146" y="69" width="2.500" height="6" fill="#6a5a48"/><rect x="152" y="69" width="2.500" height="6" fill="#6a5a48"/><rect x="37.0" y="50" width="2" height="4" fill="#8a7a70"/><rect x="41.5" y="50" width="2" height="4" fill="#8a7a70"/><rect x="46.0" y="50" width="2" height="4" fill="#8a7a70"/><rect x="50.5" y="50" width="2" height="4" fill="#8a7a70"/><rect x="55.0" y="50" width="2" height="4" fill="#8a7a70"/><rect x="37.0" y="58" width="2" height="4" fill="#8a7a70"/><rect x="41.5" y="58" width="2" height="4" fill="#8a7a70"/><rect x="46.0" y="58" width="2" height="4" fill="#8a7a70"/><rect x="50.5" y="58" width="2" height="4" fill="#8a7a70"/><rect x="55.0" y="58" width="2" height="4" fill="#8a7a70"/><rect x="37.0" y="66" width="2" height="4" fill="#8a7a70"/><rect x="41.5" y="66" width="2" height="4" fill="#8a7a70"/><rect x="46.0" y="66" width="2" height="4" fill="#8a7a70"/><rect x="50.5" y="66" width="2" height="4" fill="#8a7a70"/><rect x="55.0" y="66" width="2" height="4" fill="#8a7a70"/>
<rect x="0" y="79" width="250" height="6" fill="#6a6a62" opacity=".55"/>
<rect y="84" width="250" height="84" fill="url(#vw3)"/>
<ellipse cx="141" cy="124" rx="11.3" ry="1.4" fill="#0d3a55" opacity="0.43" transform="rotate(0 141 124)"/><ellipse cx="204" cy="139" rx="4.9" ry="1.7" fill="#0b2f4a" opacity="0.75" transform="rotate(2 204 139)"/><ellipse cx="97" cy="136" rx="8.4" ry="1.6" fill="#3a98b4" opacity="0.42" transform="rotate(-6 97 136)"/><ellipse cx="6" cy="130" rx="5.4" ry="1.5" fill="#0b2f4a" opacity="0.70" transform="rotate(-2 6 130)"/><ellipse cx="43" cy="136" rx="6.2" ry="1.6" fill="#0b2f4a" opacity="0.65" transform="rotate(-1 43 136)"/><ellipse cx="259" cy="109" rx="9.4" ry="1.1" fill="#6fb0c4" opacity="0.46" transform="rotate(3 259 109)"/><ellipse cx="-2" cy="129" rx="8.8" ry="1.5" fill="#0b2f4a" opacity="0.73" transform="rotate(-1 -2 129)"/><ellipse cx="219" cy="166" rx="5.2" ry="2.2" fill="#0b2f4a" opacity="0.79" transform="rotate(-1 219 166)"/><ellipse cx="160" cy="92" rx="5.5" ry="0.7" fill="#0b2f4a" opacity="0.49" transform="rotate(-6 160 92)"/><ellipse cx="239" cy="120" rx="4.2" ry="1.3" fill="#9a8478" opacity="0.43" transform="rotate(1 239 120)"/><ellipse cx="41" cy="124" rx="9.6" ry="1.4" fill="#0a2840" opacity="0.40" transform="rotate(-1 41 124)"/><ellipse cx="63" cy="104" rx="8.4" ry="1.0" fill="#a8d4e0" opacity="0.80" transform="rotate(-6 63 104)"/><ellipse cx="259" cy="102" rx="5.8" ry="0.9" fill="#2a86a4" opacity="0.80" transform="rotate(-3 259 102)"/><ellipse cx="199" cy="108" rx="4.7" ry="1.0" fill="#0b2f4a" opacity="0.38" transform="rotate(-3 199 108)"/><ellipse cx="-6" cy="139" rx="7.9" ry="1.7" fill="#2a86a4" opacity="0.78" transform="rotate(-0 -6 139)"/><ellipse cx="224" cy="134" rx="5.6" ry="1.6" fill="#0d3a55" opacity="0.46" transform="rotate(-4 224 134)"/><ellipse cx="244" cy="148" rx="6.7" ry="1.9" fill="#a8d4e0" opacity="0.54" transform="rotate(-5 244 148)"/><ellipse cx="250" cy="89" rx="2.7" ry="0.7" fill="#1f7494" opacity="0.54" transform="rotate(5 250 89)"/><ellipse cx="130" cy="127" rx="11.9" ry="1.4" fill="#8cc4d4" opacity="0.45" transform="rotate(1 130 127)"/><ellipse cx="156" cy="158" rx="8.4" ry="2.0" fill="#8cc4d4" opacity="0.38" transform="rotate(-1 156 158)"/><ellipse cx="3" cy="107" rx="4.3" ry="1.0" fill="#2a86a4" opacity="0.39" transform="rotate(-4 3 107)"/><ellipse cx="79" cy="124" rx="9.6" ry="1.4" fill="#2a86a4" opacity="0.62" transform="rotate(5 79 124)"/><ellipse cx="87" cy="126" rx="6.1" ry="1.4" fill="#0b2f4a" opacity="0.57" transform="rotate(3 87 126)"/><ellipse cx="260" cy="113" rx="3.3" ry="1.1" fill="#3a98b4" opacity="0.37" transform="rotate(5 260 113)"/><ellipse cx="25" cy="148" rx="15.6" ry="1.9" fill="#0b2f4a" opacity="0.66" transform="rotate(5 25 148)"/><ellipse cx="103" cy="159" rx="15.2" ry="2.1" fill="#6fb0c4" opacity="0.36" transform="rotate(2 103 159)"/><ellipse cx="-7" cy="118" rx="3.6" ry="1.2" fill="#0b2f4a" opacity="0.80" transform="rotate(5 -7 118)"/><ellipse cx="95" cy="147" rx="12.8" ry="1.8" fill="#1f7494" opacity="0.56" transform="rotate(0 95 147)"/><ellipse cx="129" cy="130" rx="6.4" ry="1.5" fill="#0b2f4a" opacity="0.45" transform="rotate(2 129 130)"/><ellipse cx="156" cy="128" rx="11.9" ry="1.4" fill="#0b2f4a" opacity="0.41" transform="rotate(1 156 128)"/><ellipse cx="194" cy="130" rx="6.7" ry="1.5" fill="#a8d4e0" opacity="0.50" transform="rotate(2 194 130)"/><ellipse cx="106" cy="103" rx="7.2" ry="0.9" fill="#8cc4d4" opacity="0.52" transform="rotate(1 106 103)"/><ellipse cx="27" cy="113" rx="6.4" ry="1.1" fill="#8cc4d4" opacity="0.67" transform="rotate(5 27 113)"/><ellipse cx="36" cy="109" rx="5.7" ry="1.1" fill="#0d3a55" opacity="0.72" transform="rotate(-1 36 109)"/><ellipse cx="171" cy="130" rx="10.3" ry="1.5" fill="#6fb0c4" opacity="0.38" transform="rotate(-6 171 130)"/><ellipse cx="1" cy="159" rx="14.2" ry="2.1" fill="#1f7494" opacity="0.64" transform="rotate(1 1 159)"/><ellipse cx="99" cy="140" rx="6.0" ry="1.7" fill="#1f7494" opacity="0.46" transform="rotate(-4 99 140)"/><ellipse cx="160" cy="90" rx="3.7" ry="0.7" fill="#3a98b4" opacity="0.64" transform="rotate(-2 160 90)"/><ellipse cx="43" cy="93" rx="5.8" ry="0.7" fill="#0b2f4a" opacity="0.69" transform="rotate(0 43 93)"/><ellipse cx="51" cy="89" rx="5.0" ry="0.7" fill="#3a98b4" opacity="0.58" transform="rotate(6 51 89)"/><ellipse cx="219" cy="99" rx="6.1" ry="0.9" fill="#0a2840" opacity="0.77" transform="rotate(3 219 99)"/><ellipse cx="112" cy="97" rx="5.4" ry="0.8" fill="#a8d4e0" opacity="0.60" transform="rotate(2 112 97)"/><ellipse cx="211" cy="128" rx="6.6" ry="1.5" fill="#b0a090" opacity="0.77" transform="rotate(-5 211 128)"/><ellipse cx="95" cy="106" rx="3.0" ry="1.0" fill="#0f4460" opacity="0.47" transform="rotate(3 95 106)"/><ellipse cx="126" cy="87" rx="1.7" ry="0.6" fill="#0a2840" opacity="0.70" transform="rotate(-0 126 87)"/><ellipse cx="208" cy="88" rx="1.9" ry="0.6" fill="#2a86a4" opacity="0.59" transform="rotate(2 208 88)"/><ellipse cx="117" cy="163" rx="18.6" ry="2.2" fill="#6fb0c4" opacity="0.73" transform="rotate(2 117 163)"/><ellipse cx="123" cy="165" rx="18.3" ry="2.2" fill="#0d3a55" opacity="0.55" transform="rotate(1 123 165)"/><ellipse cx="142" cy="156" rx="6.8" ry="2.0" fill="#3a98b4" opacity="0.47" transform="rotate(2 142 156)"/><ellipse cx="225" cy="166" rx="13.7" ry="2.2" fill="#0d3a55" opacity="0.59" transform="rotate(1 225 166)"/><ellipse cx="135" cy="103" rx="5.3" ry="0.9" fill="#2a86a4" opacity="0.59" transform="rotate(-5 135 103)"/><ellipse cx="137" cy="163" rx="18.5" ry="2.2" fill="#0b2f4a" opacity="0.66" transform="rotate(-5 137 163)"/><ellipse cx="102" cy="131" rx="12.8" ry="1.5" fill="#a8d4e0" opacity="0.46" transform="rotate(-0 102 131)"/><ellipse cx="233" cy="115" rx="9.9" ry="1.2" fill="#6fb0c4" opacity="0.49" transform="rotate(-4 233 115)"/><ellipse cx="240" cy="138" rx="5.3" ry="1.7" fill="#8a8a80" opacity="0.45" transform="rotate(2 240 138)"/><ellipse cx="86" cy="113" rx="7.3" ry="1.1" fill="#0b2f4a" opacity="0.73" transform="rotate(1 86 113)"/><ellipse cx="179" cy="146" rx="14.4" ry="1.8" fill="#0a2840" opacity="0.63" transform="rotate(0 179 146)"/><ellipse cx="134" cy="159" rx="7.7" ry="2.1" fill="#0d3a55" opacity="0.45" transform="rotate(3 134 159)"/><ellipse cx="234" cy="154" rx="8.6" ry="2.0" fill="#8a8a80" opacity="0.75" transform="rotate(-4 234 154)"/><ellipse cx="186" cy="106" rx="4.1" ry="1.0" fill="#0a2840" opacity="0.59" transform="rotate(2 186 106)"/><ellipse cx="160" cy="103" rx="7.1" ry="0.9" fill="#0f4460" opacity="0.76" transform="rotate(6 160 103)"/><ellipse cx="127" cy="96" rx="5.9" ry="0.8" fill="#3a98b4" opacity="0.72" transform="rotate(4 127 96)"/><ellipse cx="-3" cy="126" rx="10.2" ry="1.4" fill="#3a98b4" opacity="0.57" transform="rotate(-4 -3 126)"/><ellipse cx="37" cy="96" rx="2.8" ry="0.8" fill="#0b2f4a" opacity="0.61" transform="rotate(-4 37 96)"/><ellipse cx="11" cy="143" rx="5.2" ry="1.8" fill="#0a2840" opacity="0.58" transform="rotate(-1 11 143)"/><ellipse cx="-6" cy="136" rx="11.0" ry="1.6" fill="#8cc4d4" opacity="0.53" transform="rotate(-2 -6 136)"/><ellipse cx="239" cy="117" rx="7.7" ry="1.2" fill="#0b2f4a" opacity="0.50" transform="rotate(-5 239 117)"/><ellipse cx="226" cy="157" rx="16.4" ry="2.0" fill="#6fb0c4" opacity="0.58" transform="rotate(6 226 157)"/><ellipse cx="60" cy="154" rx="15.9" ry="2.0" fill="#2a86a4" opacity="0.72" transform="rotate(-1 60 154)"/><ellipse cx="228" cy="161" rx="14.3" ry="2.1" fill="#2a86a4" opacity="0.68" transform="rotate(-5 228 161)"/><ellipse cx="117" cy="115" rx="2.9" ry="1.2" fill="#0b2f4a" opacity="0.45" transform="rotate(5 117 115)"/><ellipse cx="81" cy="142" rx="11.3" ry="1.7" fill="#3a98b4" opacity="0.38" transform="rotate(0 81 142)"/><ellipse cx="48" cy="128" rx="4.5" ry="1.4" fill="#0b2f4a" opacity="0.40" transform="rotate(-5 48 128)"/><ellipse cx="110" cy="106" rx="5.7" ry="1.0" fill="#3a98b4" opacity="0.52" transform="rotate(-5 110 106)"/><ellipse cx="235" cy="107" rx="6.1" ry="1.0" fill="#3a98b4" opacity="0.61" transform="rotate(6 235 107)"/><ellipse cx="209" cy="140" rx="4.8" ry="1.7" fill="#2a86a4" opacity="0.77" transform="rotate(-1 209 140)"/><ellipse cx="221" cy="167" rx="12.9" ry="2.2" fill="#1f7494" opacity="0.54" transform="rotate(0 221 167)"/><ellipse cx="89" cy="136" rx="6.8" ry="1.6" fill="#3a98b4" opacity="0.77" transform="rotate(2 89 136)"/><ellipse cx="-3" cy="149" rx="13.5" ry="1.9" fill="#3a98b4" opacity="0.42" transform="rotate(3 -3 149)"/><ellipse cx="232" cy="119" rx="9.0" ry="1.3" fill="#8a8a80" opacity="0.54" transform="rotate(-0 232 119)"/><ellipse cx="56" cy="168" rx="12.7" ry="2.3" fill="#6fb0c4" opacity="0.76" transform="rotate(-4 56 168)"/><ellipse cx="56" cy="167" rx="15.1" ry="2.2" fill="#0a2840" opacity="0.56" transform="rotate(-4 56 167)"/><ellipse cx="133" cy="90" rx="2.3" ry="0.7" fill="#0a2840" opacity="0.55" transform="rotate(-3 133 90)"/><ellipse cx="103" cy="135" rx="11.6" ry="1.6" fill="#2a86a4" opacity="0.78" transform="rotate(3 103 135)"/><ellipse cx="21" cy="106" rx="8.2" ry="1.0" fill="#3a98b4" opacity="0.73" transform="rotate(-3 21 106)"/><ellipse cx="186" cy="137" rx="11.1" ry="1.6" fill="#0f4460" opacity="0.44" transform="rotate(-3 186 137)"/><ellipse cx="237" cy="168" rx="17.8" ry="2.3" fill="#9a8478" opacity="0.54" transform="rotate(1 237 168)"/><ellipse cx="136" cy="95" rx="2.3" ry="0.8" fill="#0d3a55" opacity="0.60" transform="rotate(2 136 95)"/><ellipse cx="119" cy="117" rx="4.6" ry="1.2" fill="#0d3a55" opacity="0.73" transform="rotate(-5 119 117)"/><ellipse cx="208" cy="96" rx="5.2" ry="0.8" fill="#2a86a4" opacity="0.55" transform="rotate(3 208 96)"/><ellipse cx="31" cy="119" rx="4.3" ry="1.3" fill="#6fb0c4" opacity="0.50" transform="rotate(1 31 119)"/><ellipse cx="239" cy="149" rx="9.4" ry="1.9" fill="#0b2f4a" opacity="0.50" transform="rotate(1 239 149)"/><ellipse cx="143" cy="122" rx="10.1" ry="1.3" fill="#0b2f4a" opacity="0.38" transform="rotate(-3 143 122)"/><ellipse cx="12" cy="142" rx="7.4" ry="1.7" fill="#3a98b4" opacity="0.50" transform="rotate(5 12 142)"/><ellipse cx="167" cy="104" rx="4.4" ry="1.0" fill="#a8d4e0" opacity="0.67" transform="rotate(1 167 104)"/><ellipse cx="244" cy="163" rx="17.5" ry="2.2" fill="#0f4460" opacity="0.45" transform="rotate(6 244 163)"/><ellipse cx="129" cy="147" rx="5.3" ry="1.8" fill="#8cc4d4" opacity="0.51" transform="rotate(-1 129 147)"/><ellipse cx="43" cy="119" rx="7.5" ry="1.3" fill="#3a98b4" opacity="0.42" transform="rotate(1 43 119)"/><ellipse cx="14" cy="101" rx="4.8" ry="0.9" fill="#8cc4d4" opacity="0.45" transform="rotate(-5 14 101)"/><ellipse cx="70" cy="99" rx="2.2" ry="0.9" fill="#a8d4e0" opacity="0.38" transform="rotate(1 70 99)"/><ellipse cx="13" cy="152" rx="5.6" ry="1.9" fill="#1f7494" opacity="0.39" transform="rotate(2 13 152)"/><ellipse cx="191" cy="98" rx="5.6" ry="0.8" fill="#0d3a55" opacity="0.57" transform="rotate(5 191 98)"/><ellipse cx="114" cy="114" rx="5.5" ry="1.2" fill="#a8d4e0" opacity="0.65" transform="rotate(-0 114 114)"/><ellipse cx="185" cy="131" rx="10.4" ry="1.5" fill="#a8d4e0" opacity="0.79" transform="rotate(-2 185 131)"/><ellipse cx="92" cy="86" rx="1.9" ry="0.6" fill="#0b2f4a" opacity="0.59" transform="rotate(3 92 86)"/><ellipse cx="104" cy="153" rx="9.8" ry="2.0" fill="#0d3a55" opacity="0.80" transform="rotate(-1 104 153)"/><ellipse cx="45" cy="100" rx="4.6" ry="0.9" fill="#0b2f4a" opacity="0.56" transform="rotate(3 45 100)"/><ellipse cx="32" cy="111" rx="9.3" ry="1.1" fill="#a8d4e0" opacity="0.36" transform="rotate(-0 32 111)"/><ellipse cx="74" cy="153" rx="7.1" ry="2.0" fill="#0d3a55" opacity="0.62" transform="rotate(-0 74 153)"/><ellipse cx="109" cy="129" rx="11.8" ry="1.5" fill="#0f4460" opacity="0.63" transform="rotate(5 109 129)"/><ellipse cx="220" cy="132" rx="8.4" ry="1.5" fill="#0f4460" opacity="0.70" transform="rotate(-5 220 132)"/><ellipse cx="98" cy="158" rx="7.7" ry="2.1" fill="#0a2840" opacity="0.79" transform="rotate(4 98 158)"/><ellipse cx="203" cy="151" rx="5.2" ry="1.9" fill="#8cc4d4" opacity="0.76" transform="rotate(-1 203 151)"/><ellipse cx="104" cy="107" rx="8.2" ry="1.0" fill="#0f4460" opacity="0.42" transform="rotate(5 104 107)"/><ellipse cx="25" cy="154" rx="13.9" ry="2.0" fill="#3a98b4" opacity="0.59" transform="rotate(-4 25 154)"/><ellipse cx="-10" cy="151" rx="14.4" ry="1.9" fill="#8cc4d4" opacity="0.39" transform="rotate(-3 -10 151)"/><ellipse cx="16" cy="146" rx="9.8" ry="1.8" fill="#0f4460" opacity="0.36" transform="rotate(-4 16 146)"/><ellipse cx="174" cy="102" rx="6.9" ry="0.9" fill="#0b2f4a" opacity="0.59" transform="rotate(0 174 102)"/><ellipse cx="215" cy="99" rx="3.9" ry="0.9" fill="#0b2f4a" opacity="0.60" transform="rotate(6 215 99)"/><ellipse cx="8" cy="142" rx="4.9" ry="1.7" fill="#0a2840" opacity="0.65" transform="rotate(3 8 142)"/><ellipse cx="23" cy="152" rx="10.0" ry="1.9" fill="#6fb0c4" opacity="0.67" transform="rotate(-3 23 152)"/><ellipse cx="114" cy="133" rx="3.8" ry="1.6" fill="#6fb0c4" opacity="0.44" transform="rotate(1 114 133)"/><ellipse cx="92" cy="110" rx="6.4" ry="1.1" fill="#0f4460" opacity="0.69" transform="rotate(1 92 110)"/><ellipse cx="41" cy="93" rx="3.7" ry="0.7" fill="#0f4460" opacity="0.78" transform="rotate(1 41 93)"/><ellipse cx="80" cy="147" rx="13.9" ry="1.8" fill="#0d3a55" opacity="0.63" transform="rotate(-4 80 147)"/><ellipse cx="38" cy="139" rx="6.0" ry="1.7" fill="#0a2840" opacity="0.62" transform="rotate(-5 38 139)"/><ellipse cx="32" cy="105" rx="3.2" ry="1.0" fill="#0b2f4a" opacity="0.50" transform="rotate(4 32 105)"/><ellipse cx="28" cy="164" rx="7.9" ry="2.2" fill="#0a2840" opacity="0.57" transform="rotate(5 28 164)"/><ellipse cx="186" cy="138" rx="10.4" ry="1.7" fill="#0d3a55" opacity="0.62" transform="rotate(-6 186 138)"/><ellipse cx="82" cy="114" rx="7.6" ry="1.2" fill="#0a2840" opacity="0.44" transform="rotate(-2 82 114)"/><ellipse cx="18" cy="111" rx="7.7" ry="1.1" fill="#0f4460" opacity="0.60" transform="rotate(-2 18 111)"/><ellipse cx="28" cy="128" rx="10.0" ry="1.5" fill="#6fb0c4" opacity="0.80" transform="rotate(2 28 128)"/><ellipse cx="143" cy="165" rx="5.5" ry="2.2" fill="#2a86a4" opacity="0.41" transform="rotate(-0 143 165)"/><ellipse cx="80" cy="121" rx="3.9" ry="1.3" fill="#a8d4e0" opacity="0.56" transform="rotate(-5 80 121)"/><ellipse cx="27" cy="168" rx="18.1" ry="2.3" fill="#3a98b4" opacity="0.38" transform="rotate(5 27 168)"/><ellipse cx="191" cy="100" rx="7.3" ry="0.9" fill="#0d3a55" opacity="0.41" transform="rotate(4 191 100)"/><ellipse cx="232" cy="110" rx="4.3" ry="1.1" fill="#2a86a4" opacity="0.43" transform="rotate(1 232 110)"/><ellipse cx="-1" cy="92" rx="2.7" ry="0.7" fill="#6fb0c4" opacity="0.41" transform="rotate(3 -1 92)"/><ellipse cx="235" cy="157" rx="12.7" ry="2.0" fill="#9a8478" opacity="0.56" transform="rotate(-4 235 157)"/><ellipse cx="144" cy="118" rx="4.4" ry="1.3" fill="#1f7494" opacity="0.46" transform="rotate(5 144 118)"/><ellipse cx="202" cy="90" rx="5.0" ry="0.7" fill="#1f7494" opacity="0.78" transform="rotate(1 202 90)"/><ellipse cx="101" cy="125" rx="8.9" ry="1.4" fill="#1f7494" opacity="0.69" transform="rotate(-0 101 125)"/><ellipse cx="216" cy="170" rx="17.6" ry="2.3" fill="#8a8a80" opacity="0.76" transform="rotate(0 216 170)"/><ellipse cx="107" cy="130" rx="12.1" ry="1.5" fill="#0b2f4a" opacity="0.48" transform="rotate(1 107 130)"/><ellipse cx="92" cy="122" rx="5.9" ry="1.3" fill="#3a98b4" opacity="0.74" transform="rotate(-3 92 122)"/><ellipse cx="55" cy="157" rx="16.0" ry="2.0" fill="#a8d4e0" opacity="0.66" transform="rotate(0 55 157)"/><ellipse cx="73" cy="106" rx="5.0" ry="1.0" fill="#0b2f4a" opacity="0.80" transform="rotate(3 73 106)"/><ellipse cx="90" cy="159" rx="12.0" ry="2.1" fill="#2a86a4" opacity="0.45" transform="rotate(3 90 159)"/><ellipse cx="234" cy="134" rx="4.7" ry="1.6" fill="#2a86a4" opacity="0.61" transform="rotate(-1 234 134)"/><ellipse cx="187" cy="111" rx="2.8" ry="1.1" fill="#0a2840" opacity="0.75" transform="rotate(4 187 111)"/><ellipse cx="86" cy="119" rx="7.8" ry="1.3" fill="#0b2f4a" opacity="0.55" transform="rotate(-2 86 119)"/><ellipse cx="29" cy="113" rx="8.5" ry="1.2" fill="#2a86a4" opacity="0.44" transform="rotate(4 29 113)"/><ellipse cx="6" cy="144" rx="7.7" ry="1.8" fill="#a8d4e0" opacity="0.36" transform="rotate(2 6 144)"/><ellipse cx="141" cy="145" rx="10.2" ry="1.8" fill="#0b2f4a" opacity="0.64" transform="rotate(-2 141 145)"/><ellipse cx="250" cy="155" rx="8.1" ry="2.0" fill="#9a8478" opacity="0.54" transform="rotate(-4 250 155)"/><ellipse cx="23" cy="158" rx="13.8" ry="2.1" fill="#0d3a55" opacity="0.58" transform="rotate(-2 23 158)"/><ellipse cx="207" cy="109" rx="6.2" ry="1.1" fill="#0d3a55" opacity="0.79" transform="rotate(5 207 109)"/><ellipse cx="51" cy="101" rx="3.0" ry="0.9" fill="#1f7494" opacity="0.79" transform="rotate(-1 51 101)"/><ellipse cx="133" cy="130" rx="4.0" ry="1.5" fill="#1f7494" opacity="0.59" transform="rotate(-1 133 130)"/><ellipse cx="34" cy="134" rx="13.5" ry="1.6" fill="#0d3a55" opacity="0.48" transform="rotate(1 34 134)"/><ellipse cx="232" cy="102" rx="8.1" ry="0.9" fill="#0a2840" opacity="0.76" transform="rotate(1 232 102)"/><ellipse cx="231" cy="86" rx="1.8" ry="0.6" fill="#0f4460" opacity="0.49" transform="rotate(-0 231 86)"/><ellipse cx="69" cy="89" rx="5.2" ry="0.7" fill="#3a98b4" opacity="0.68" transform="rotate(0 69 89)"/><ellipse cx="198" cy="136" rx="5.0" ry="1.6" fill="#0a2840" opacity="0.47" transform="rotate(3 198 136)"/><ellipse cx="60" cy="147" rx="10.6" ry="1.8" fill="#6fb0c4" opacity="0.57" transform="rotate(-6 60 147)"/><ellipse cx="183" cy="136" rx="9.7" ry="1.6" fill="#b0a090" opacity="0.36" transform="rotate(-0 183 136)"/><ellipse cx="109" cy="123" rx="5.4" ry="1.3" fill="#2a86a4" opacity="0.40" transform="rotate(-4 109 123)"/><ellipse cx="146" cy="140" rx="11.7" ry="1.7" fill="#2a86a4" opacity="0.49" transform="rotate(-5 146 140)"/><ellipse cx="158" cy="112" rx="6.5" ry="1.1" fill="#0a2840" opacity="0.39" transform="rotate(4 158 112)"/><ellipse cx="59" cy="100" rx="3.1" ry="0.9" fill="#3a98b4" opacity="0.70" transform="rotate(-5 59 100)"/><ellipse cx="88" cy="120" rx="4.9" ry="1.3" fill="#8cc4d4" opacity="0.41" transform="rotate(3 88 120)"/><ellipse cx="26" cy="136" rx="11.5" ry="1.6" fill="#2a86a4" opacity="0.35" transform="rotate(-1 26 136)"/><ellipse cx="15" cy="130" rx="8.8" ry="1.5" fill="#0b2f4a" opacity="0.79" transform="rotate(2 15 130)"/><ellipse cx="254" cy="146" rx="11.3" ry="1.8" fill="#0b2f4a" opacity="0.46" transform="rotate(-0 254 146)"/><ellipse cx="88" cy="164" rx="9.8" ry="2.2" fill="#6fb0c4" opacity="0.45" transform="rotate(-4 88 164)"/><ellipse cx="259" cy="135" rx="11.2" ry="1.6" fill="#3a98b4" opacity="0.43" transform="rotate(4 259 135)"/><ellipse cx="48" cy="165" rx="10.3" ry="2.2" fill="#0a2840" opacity="0.51" transform="rotate(-4 48 165)"/><ellipse cx="34" cy="132" rx="5.6" ry="1.5" fill="#0a2840" opacity="0.69" transform="rotate(-0 34 132)"/><ellipse cx="159" cy="127" rx="5.1" ry="1.4" fill="#0a2840" opacity="0.37" transform="rotate(-3 159 127)"/><ellipse cx="158" cy="166" rx="12.4" ry="2.2" fill="#3a98b4" opacity="0.77" transform="rotate(3 158 166)"/><ellipse cx="87" cy="109" rx="3.6" ry="1.1" fill="#a8d4e0" opacity="0.41" transform="rotate(-3 87 109)"/><ellipse cx="22" cy="157" rx="17.5" ry="2.0" fill="#a8d4e0" opacity="0.39" transform="rotate(5 22 157)"/><ellipse cx="198" cy="113" rx="6.6" ry="1.2" fill="#0a2840" opacity="0.62" transform="rotate(-0 198 113)"/><ellipse cx="129" cy="102" rx="3.0" ry="0.9" fill="#0a2840" opacity="0.54" transform="rotate(1 129 102)"/><ellipse cx="181" cy="97" rx="3.4" ry="0.8" fill="#3a98b4" opacity="0.52" transform="rotate(5 181 97)"/><ellipse cx="134" cy="156" rx="10.5" ry="2.0" fill="#0f4460" opacity="0.45" transform="rotate(-2 134 156)"/><ellipse cx="48" cy="115" rx="3.2" ry="1.2" fill="#0a2840" opacity="0.60" transform="rotate(4 48 115)"/><ellipse cx="70" cy="168" rx="14.8" ry="2.3" fill="#8cc4d4" opacity="0.60" transform="rotate(-2 70 168)"/><ellipse cx="199" cy="96" rx="3.9" ry="0.8" fill="#1f7494" opacity="0.39" transform="rotate(-1 199 96)"/><ellipse cx="6" cy="119" rx="6.1" ry="1.3" fill="#0a2840" opacity="0.67" transform="rotate(-3 6 119)"/><ellipse cx="45" cy="164" rx="15.6" ry="2.2" fill="#0d3a55" opacity="0.58" transform="rotate(3 45 164)"/><ellipse cx="207" cy="162" rx="11.5" ry="2.1" fill="#0f4460" opacity="0.36" transform="rotate(-1 207 162)"/><ellipse cx="7" cy="117" rx="6.1" ry="1.2" fill="#0a2840" opacity="0.73" transform="rotate(-2 7 117)"/><ellipse cx="229" cy="146" rx="5.1" ry="1.8" fill="#0f4460" opacity="0.60" transform="rotate(-3 229 146)"/><ellipse cx="40" cy="142" rx="9.2" ry="1.7" fill="#1f7494" opacity="0.36" transform="rotate(2 40 142)"/><ellipse cx="10" cy="104" rx="2.6" ry="1.0" fill="#3a98b4" opacity="0.54" transform="rotate(-3 10 104)"/><ellipse cx="228" cy="156" rx="9.6" ry="2.0" fill="#8cc4d4" opacity="0.66" transform="rotate(-3 228 156)"/><ellipse cx="118" cy="128" rx="3.6" ry="1.4" fill="#1f7494" opacity="0.45" transform="rotate(2 118 128)"/><ellipse cx="-10" cy="106" rx="5.9" ry="1.0" fill="#0d3a55" opacity="0.60" transform="rotate(4 -10 106)"/><ellipse cx="11" cy="150" rx="14.3" ry="1.9" fill="#6fb0c4" opacity="0.79" transform="rotate(-2 11 150)"/><ellipse cx="229" cy="115" rx="5.2" ry="1.2" fill="#3a98b4" opacity="0.53" transform="rotate(-4 229 115)"/><ellipse cx="33" cy="102" rx="4.2" ry="0.9" fill="#3a98b4" opacity="0.48" transform="rotate(-1 33 102)"/><ellipse cx="170" cy="117" rx="6.8" ry="1.2" fill="#1f7494" opacity="0.50" transform="rotate(-4 170 117)"/><ellipse cx="24" cy="129" rx="4.1" ry="1.5" fill="#0b2f4a" opacity="0.75" transform="rotate(-2 24 129)"/><ellipse cx="128" cy="157" rx="13.5" ry="2.0" fill="#0a2840" opacity="0.74" transform="rotate(-5 128 157)"/><ellipse cx="127" cy="107" rx="7.8" ry="1.0" fill="#0f4460" opacity="0.52" transform="rotate(2 127 107)"/><ellipse cx="221" cy="101" rx="3.4" ry="0.9" fill="#2a86a4" opacity="0.61" transform="rotate(-1 221 101)"/><ellipse cx="158" cy="145" rx="13.7" ry="1.8" fill="#b0a090" opacity="0.65" transform="rotate(-3 158 145)"/><ellipse cx="-6" cy="102" rx="5.7" ry="0.9" fill="#8cc4d4" opacity="0.47" transform="rotate(-3 -6 102)"/><ellipse cx="170" cy="107" rx="5.0" ry="1.0" fill="#2a86a4" opacity="0.37" transform="rotate(3 170 107)"/><ellipse cx="1" cy="96" rx="3.5" ry="0.8" fill="#2a86a4" opacity="0.53" transform="rotate(5 1 96)"/><ellipse cx="221" cy="156" rx="6.9" ry="2.0" fill="#0a2840" opacity="0.73" transform="rotate(-3 221 156)"/><ellipse cx="157" cy="119" rx="9.2" ry="1.3" fill="#a8d4e0" opacity="0.45" transform="rotate(-3 157 119)"/><ellipse cx="109" cy="159" rx="15.7" ry="2.1" fill="#1f7494" opacity="0.75" transform="rotate(-1 109 159)"/><ellipse cx="229" cy="99" rx="3.6" ry="0.9" fill="#1f7494" opacity="0.63" transform="rotate(-3 229 99)"/><ellipse cx="120" cy="105" rx="4.7" ry="1.0" fill="#0b2f4a" opacity="0.42" transform="rotate(-6 120 105)"/><ellipse cx="171" cy="150" rx="4.5" ry="1.9" fill="#0d3a55" opacity="0.44" transform="rotate(4 171 150)"/><ellipse cx="102" cy="127" rx="10.7" ry="1.4" fill="#0b2f4a" opacity="0.45" transform="rotate(1 102 127)"/><ellipse cx="58" cy="155" rx="7.1" ry="2.0" fill="#0d3a55" opacity="0.80" transform="rotate(-1 58 155)"/><ellipse cx="186" cy="156" rx="7.0" ry="2.0" fill="#0d3a55" opacity="0.65" transform="rotate(-3 186 156)"/><ellipse cx="140" cy="88" rx="1.9" ry="0.6" fill="#0d3a55" opacity="0.38" transform="rotate(-2 140 88)"/><ellipse cx="62" cy="150" rx="7.4" ry="1.9" fill="#a8d4e0" opacity="0.53" transform="rotate(4 62 150)"/><ellipse cx="197" cy="156" rx="17.2" ry="2.0" fill="#0a2840" opacity="0.67" transform="rotate(-3 197 156)"/><ellipse cx="-4" cy="162" rx="12.8" ry="2.1" fill="#0a2840" opacity="0.68" transform="rotate(0 -4 162)"/><ellipse cx="258" cy="109" rx="6.9" ry="1.1" fill="#0f4460" opacity="0.48" transform="rotate(5 258 109)"/><ellipse cx="15" cy="113" rx="5.2" ry="1.1" fill="#2a86a4" opacity="0.37" transform="rotate(-4 15 113)"/><ellipse cx="46" cy="112" rx="5.2" ry="1.1" fill="#0f4460" opacity="0.51" transform="rotate(-1 46 112)"/><ellipse cx="126" cy="87" rx="3.2" ry="0.6" fill="#0d3a55" opacity="0.36" transform="rotate(-4 126 87)"/><ellipse cx="149" cy="92" rx="4.5" ry="0.7" fill="#0a2840" opacity="0.78" transform="rotate(-3 149 92)"/><ellipse cx="181" cy="120" rx="4.6" ry="1.3" fill="#0a2840" opacity="0.50" transform="rotate(-4 181 120)"/>
<path d="M109 87 q2 12 14 17 q50 12 127 6 v9 q-70 6 -120 -4 q-20 -5 -21 -28z" fill="#15171c"/>
<rect x="143" y="84" width="6" height="14" fill="#f1f1f1"/><rect x="150" y="92" width="8" height="12" rx="3" fill="#b9b34a"/><rect x="162" y="92" width="8" height="13" rx="3" fill="#3a2c28"/><rect x="173" y="91" width="10" height="14" rx="4" fill="#b85a5a"/><rect x="186" y="94" width="9" height="12" rx="3" fill="#9cc0dc"/><rect x="197" y="95" width="7" height="11" rx="3" fill="#c9483a"/><rect x="204" y="96" width="7" height="10" rx="3" fill="#e4e0d8"/><rect x="212" y="97" width="6" height="10" rx="3" fill="#d8503a"/>
<rect x="217" y="78" width="7" height="12" fill="#7a7a80"/><rect x="217.500" y="90" width="6.500" height="16" fill="#26262c"/><circle cx="220" cy="75" r="2.500" fill="#b0785a"/>
<line x1="117" y1="106" x2="138" y2="90" stroke="#c9a050" stroke-width="1.600"/>
<path d="M95 120 l14 7 l3 1 l8 -6 l-6 8 l-8 -1z" fill="#5a5a58"/>
</g></svg>
<svg style="left:357.1px;top:513.4px" width="6.5" height="6.5" viewBox="0 0 24 24"><path d="M1 21h4V9H1v12zm22-11c0-1.1-.9-2-2-2h-6.31l.95-4.57.03-.32c0-.41-.17-.79-.44-1.060L14.170 1 7.590 7.590C7.220 7.950 7 8.450 7 9v10c0 1.100.9 2 2 2h9c.83 0 1.540-.5 1.840-1.220l3.020-7.050c.09-.23.14-.47.14-.73v-2z" fill="#c0201c" /></svg>
<div class="t" style="left:367.2px;top:513.7px;font-size:6.6px;font-weight:400;color:#55555c;letter-spacing:0.00px;transform:scaleX(0.780);transform-origin:0 0;">29k</div>
<svg style="left:390.8px;top:513.6px" width="6.8" height="6.8" viewBox="0 0 24 24"><path d="M20 17.170L18.830 16H4V4h16v13.170zM20 2H4c-1.100 0-2 .9-2 2v12c0 1.100.9 2 2 2h14l4 4V4c0-1.100-.9-2-2-2z" fill="#44444c" /></svg>
<div class="t" style="left:400.5px;top:513.7px;font-size:6.6px;font-weight:400;color:#55555c;letter-spacing:0.00px;transform:scaleX(0.845);transform-origin:0 0;">853</div>
<svg style="left:424.8px;top:513.5px" width="6.5" height="6.5" viewBox="0 0 24 24"><path d="M12 2C6.480 2 2 6.480 2 12s4.480 10 10 10 10-4.480 10-10S17.520 2 12 2zm-2 15l-5-5 1.410-1.410L10 14.170l7.590-7.590L19 8l-9 9z" fill="#33333a" /></svg>
<div class="t" style="left:434.2px;top:513.7px;font-size:6.6px;font-weight:400;color:#55555c;letter-spacing:0.00px;transform:scaleX(0.827);transform-origin:0 0;">42k</div>
<svg style="left:459.1px;top:513.3px" width="6.8" height="6.8" viewBox="0 0 24 24"><path d="M15 5l-1.410 1.410L18.170 11H2v2h16.170l-4.590 4.590L15 19l7-7-7-7z" fill="#44444c" /></svg>
<div class="t" style="left:468.4px;top:514.0px;font-size:6.3px;font-weight:400;color:#55555c;letter-spacing:0.00px;transform:scaleX(0.752);transform-origin:0 0;">124</div>
<div class="b" style="left:350px;top:532px;width:135.5px;height:1.2000000000000455px;background:#c1c0c9;border-radius:0px;"></div>
<div class="b" style="left:353.8px;top:532.9px;width:22.0px;height:22.0px;background:#2a2944;border-radius:11px;"></div><div class="t" style="left:362.4px;top:540.4px;font-size:2.148px;font-weight:700;color:#e8e8f0;letter-spacing:0.27px;">THE</div><div class="b" style="left:357.8727px;top:542.7723px;width:13.854600000000005px;height:5.155200000000036px;background:#d0252b;border-radius:0.5px;"></div><div class="t" style="left:358.9px;top:543.7px;font-size:3.7590000000000003px;font-weight:700;color:#fff;letter-spacing:0.14px;">NEWS</div>
<div class="t" style="left:383.8px;top:536.7px;font-size:5.8px;font-weight:400;color:#2a2a30;letter-spacing:-0.09px;-webkit-text-stroke:0.2px #2a2a30;">News App</div>
<div class="t" style="left:383.8px;top:545.1px;font-size:5.6px;font-weight:400;color:#707078;letter-spacing:0.00px;transform:scaleX(0.882);transform-origin:0 0;">Sep 17, 2025</div>
<svg style="left:467.6px;top:540.9px" width="5.5" height="5.5" viewBox="0 0 24 24"><path d="M12 8c1.1 0 2-.9 2-2s-.9-2-2-2-2 .9-2 2 .9 2 2 2zm0 2c-1.1 0-2 .9-2 2s.9 2 2 2 2-.9 2-2-.9-2-2-2zm0 6c-1.1 0-2 .9-2 2s.9 2 2 2 2-.9 2-2-.9-2-2-2z" fill="#55555c" /></svg>
<div class="b" style="left:350px;top:558px;width:135.5px;height:68px;background:transparent;border-radius:0px;overflow:hidden;border-radius:0 0 6px 6px;"><svg style="left:0px;top:0px" width="135.5" height="68" viewBox="0 0 250 125" preserveAspectRatio="none">
<defs><linearGradient id="ms4" x1="0" y1="0" x2="0" y2="1"><stop offset="0" stop-color="#dde3ea"/><stop offset=".22" stop-color="#e6ebf1"/><stop offset=".45" stop-color="#dbe4ef"/><stop offset="1" stop-color="#c9d8ea"/></linearGradient>
<linearGradient id="mb4" gradientUnits="userSpaceOnUse" x1="0" y1="30" x2="0" y2="125"><stop offset="0" stop-color="#a9c0de"/><stop offset=".3" stop-color="#86a6cf"/><stop offset=".65" stop-color="#5b86c0"/><stop offset="1" stop-color="#4474b4"/></linearGradient>
<linearGradient id="mr4" gradientUnits="userSpaceOnUse" x1="0" y1="50" x2="0" y2="100"><stop offset="0" stop-color="#7f9cc4"/><stop offset="1" stop-color="#34609f"/></linearGradient>
<linearGradient id="mw4" gradientUnits="userSpaceOnUse" x1="0" y1="48" x2="0" y2="125"><stop offset="0" stop-color="#d3e1f3"/><stop offset=".4" stop-color="#a9c4e6"/><stop offset=".65" stop-color="#6c96cc"/><stop offset="1" stop-color="#7ea4d6"/></linearGradient>
<filter id="mf4" x="-10%" y="-30%" width="120%" height="160%"><feGaussianBlur stdDeviation="1.800"/></filter>
<filter id="mg4" x="-10%" y="-30%" width="120%" height="160%"><feGaussianBlur stdDeviation="0.600"/></filter>
<filter id="mh4" x="-10%" y="-30%" width="120%" height="160%"><feGaussianBlur stdDeviation="3.500"/></filter>
<clipPath id="mc4"><rect width="250" height="125"/></clipPath></defs>
<g clip-path="url(#mc4)">
<rect width="250" height="125" fill="url(#ms4)"/>
<rect x="180" y="0" width="80" height="60" fill="#cfd8e4" opacity=".6" filter="url(#mh4)"/>
<path d="M-6 41 Q10 38 25 35 Q43 30 60 35 Q80 41 103 42 Q125 40 140 34 Q160 28 180 29 Q200 31 205 37 Q198 43 206 46 Q216 47 214 54 Q205 60 215 66 L240 58 L256 56 V130 H-6z" fill="url(#mb4)" filter="url(#mf4)"/>
<path d="M112 44 Q140 36 170 36 Q192 38 196 44 Q180 50 150 52 Q125 54 112 50z" fill="#5f86bb" opacity=".75" filter="url(#mf4)"/>
<path d="M-4 50 Q15 44 34 46 Q20 56 -4 60z" fill="#c2d3ea" opacity=".8" filter="url(#mf4)"/>
<path d="M-2 61 L8 58 L18 59 L26 66 L34 70 L44 62 L52 54 L58 47 L62 44 L68 47 L76 50 L86 53 L94 56 L88 64 L84 74 L80 91 L70 110 L50 128 L-2 128z" fill="#3d669f" filter="url(#mg4)"/>
<path d="M40 68 L58 48 L62 45 L66 49 L56 66 L64 60 L76 51 L90 56 L74 64 L66 78 L54 80 L46 91 L30 91z" fill="#b7cde8" opacity=".7" filter="url(#mg4)"/>
<g filter="url(#mg4)"><line x1="59.3" y1="57.8" x2="57.9" y2="62.1" stroke="#d6e3f3" stroke-width="1.0" opacity="0.7"/><line x1="78.1" y1="57.9" x2="70.3" y2="75.4" stroke="#d6e3f3" stroke-width="1.4" opacity="0.7"/><line x1="47.2" y1="68.9" x2="48.8" y2="76.8" stroke="#d6e3f3" stroke-width="0.7" opacity="0.7"/><line x1="57.9" y1="59.4" x2="63.4" y2="68.4" stroke="#d6e3f3" stroke-width="0.6" opacity="0.7"/><line x1="68.2" y1="66.6" x2="75.1" y2="66.7" stroke="#d6e3f3" stroke-width="0.7" opacity="0.7"/><line x1="81.7" y1="63.4" x2="84.4" y2="76.1" stroke="#d6e3f3" stroke-width="0.9" opacity="0.7"/><line x1="63.1" y1="62.9" x2="67.5" y2="81.4" stroke="#d6e3f3" stroke-width="0.5" opacity="0.7"/><line x1="47.5" y1="67.0" x2="42.3" y2="83.4" stroke="#d6e3f3" stroke-width="0.8" opacity="0.7"/><line x1="80.3" y1="59.3" x2="86.7" y2="71.2" stroke="#d6e3f3" stroke-width="0.7" opacity="0.7"/><line x1="72.9" y1="59.9" x2="73.6" y2="72.9" stroke="#d6e3f3" stroke-width="1.1" opacity="0.7"/><line x1="56.3" y1="58.6" x2="60.0" y2="65.2" stroke="#d6e3f3" stroke-width="0.6" opacity="0.7"/><line x1="40.6" y1="72.3" x2="34.2" y2="89.3" stroke="#d6e3f3" stroke-width="0.6" opacity="0.7"/><line x1="64.8" y1="60.5" x2="68.8" y2="73.7" stroke="#d6e3f3" stroke-width="1.3" opacity="0.7"/><line x1="65.0" y1="47.4" x2="57.9" y2="65.3" stroke="#d6e3f3" stroke-width="1.1" opacity="0.7"/><line x1="62.4" y1="54.4" x2="59.6" y2="62.4" stroke="#d6e3f3" stroke-width="0.8" opacity="0.7"/><line x1="52.6" y1="58.8" x2="66.0" y2="65.0" stroke="#d6e3f3" stroke-width="0.5" opacity="0.7"/><line x1="54.1" y1="59.5" x2="65.4" y2="64.7" stroke="#d6e3f3" stroke-width="1.4" opacity="0.7"/><line x1="73.2" y1="55.0" x2="66.3" y2="73.3" stroke="#d6e3f3" stroke-width="0.9" opacity="0.7"/><line x1="81.4" y1="56.8" x2="77.7" y2="75.9" stroke="#d6e3f3" stroke-width="1.4" opacity="0.7"/><line x1="67.8" y1="61.9" x2="66.1" y2="72.9" stroke="#d6e3f3" stroke-width="0.8" opacity="0.7"/><line x1="66.1" y1="55.3" x2="70.4" y2="66.8" stroke="#d6e3f3" stroke-width="1.0" opacity="0.7"/><line x1="59.1" y1="52.1" x2="59.5" y2="62.4" stroke="#d6e3f3" stroke-width="0.8" opacity="0.7"/><line x1="71.7" y1="57.9" x2="73.6" y2="63.6" stroke="#d6e3f3" stroke-width="0.5" opacity="0.7"/><line x1="61.0" y1="52.0" x2="71.1" y2="53.3" stroke="#d6e3f3" stroke-width="0.8" opacity="0.7"/><line x1="78.5" y1="59.0" x2="76.4" y2="67.8" stroke="#d6e3f3" stroke-width="1.0" opacity="0.7"/><line x1="72.5" y1="59.8" x2="75.7" y2="59.7" stroke="#d6e3f3" stroke-width="1.1" opacity="0.7"/><line x1="58.4" y1="55.9" x2="52.2" y2="63.6" stroke="#23406c" stroke-width="0.7" opacity="0.65"/><line x1="48.8" y1="69.6" x2="51.0" y2="69.6" stroke="#23406c" stroke-width="1.1" opacity="0.65"/><line x1="53.4" y1="56.7" x2="54.8" y2="73.7" stroke="#23406c" stroke-width="1.1" opacity="0.65"/><line x1="77.0" y1="60.2" x2="79.0" y2="65.6" stroke="#23406c" stroke-width="0.7" opacity="0.65"/><line x1="74.9" y1="62.7" x2="78.7" y2="75.2" stroke="#23406c" stroke-width="1.2" opacity="0.65"/><line x1="59.0" y1="49.3" x2="68.1" y2="58.5" stroke="#23406c" stroke-width="1.2" opacity="0.65"/><line x1="68.3" y1="56.5" x2="69.3" y2="68.1" stroke="#23406c" stroke-width="0.5" opacity="0.65"/><line x1="51.5" y1="69.0" x2="41.1" y2="68.1" stroke="#23406c" stroke-width="1.4" opacity="0.65"/><line x1="49.7" y1="62.3" x2="49.2" y2="83.8" stroke="#23406c" stroke-width="0.9" opacity="0.65"/><line x1="70.3" y1="62.7" x2="75.3" y2="74.3" stroke="#23406c" stroke-width="0.7" opacity="0.65"/><line x1="59.0" y1="49.0" x2="69.2" y2="68.5" stroke="#23406c" stroke-width="0.5" opacity="0.65"/><line x1="75.2" y1="67.2" x2="75.9" y2="80.8" stroke="#23406c" stroke-width="1.0" opacity="0.65"/><line x1="62.0" y1="48.9" x2="61.6" y2="54.9" stroke="#23406c" stroke-width="0.5" opacity="0.65"/><line x1="80.9" y1="58.7" x2="78.3" y2="77.0" stroke="#23406c" stroke-width="0.7" opacity="0.65"/><line x1="68.5" y1="61.8" x2="72.8" y2="79.0" stroke="#23406c" stroke-width="0.6" opacity="0.65"/><line x1="70.2" y1="67.1" x2="64.4" y2="69.8" stroke="#23406c" stroke-width="0.6" opacity="0.65"/><line x1="61.2" y1="53.1" x2="61.8" y2="62.1" stroke="#23406c" stroke-width="0.7" opacity="0.65"/><line x1="79.8" y1="62.2" x2="80.5" y2="68.8" stroke="#23406c" stroke-width="0.5" opacity="0.65"/><line x1="58.4" y1="50.9" x2="67.5" y2="53.7" stroke="#23406c" stroke-width="0.5" opacity="0.65"/><line x1="58.5" y1="68.5" x2="51.7" y2="80.0" stroke="#23406c" stroke-width="0.8" opacity="0.65"/><line x1="58.1" y1="73.9" x2="57.8" y2="76.9" stroke="#23406c" stroke-width="0.9" opacity="0.65"/><line x1="55.0" y1="54.6" x2="57.1" y2="71.5" stroke="#23406c" stroke-width="0.7" opacity="0.65"/></g>
<path d="M-2 66 L8 60 L20 64 L28 78 L36 92 L48 108 L56 128 L-2 128z" fill="#2f568f" filter="url(#mg4)"/><g filter="url(#mg4)"><line x1="11.4" y1="60.5" x2="13.2" y2="71.0" stroke="#b9cde6" stroke-width="1.1" opacity="0.5"/><line x1="35.1" y1="104.8" x2="37.1" y2="119.2" stroke="#b9cde6" stroke-width="0.7" opacity="0.5"/><line x1="8.0" y1="64.0" x2="15.5" y2="68.7" stroke="#b9cde6" stroke-width="1.2" opacity="0.5"/><line x1="19.6" y1="72.5" x2="27.5" y2="87.1" stroke="#b9cde6" stroke-width="0.6" opacity="0.5"/><line x1="2.2" y1="70.8" x2="10.9" y2="77.8" stroke="#b9cde6" stroke-width="0.6" opacity="0.5"/><line x1="37.6" y1="108.5" x2="44.2" y2="111.8" stroke="#b9cde6" stroke-width="1.1" opacity="0.5"/><line x1="4.7" y1="71.2" x2="10.3" y2="88.0" stroke="#b9cde6" stroke-width="0.9" opacity="0.5"/><line x1="11.4" y1="66.9" x2="14.9" y2="68.7" stroke="#b9cde6" stroke-width="0.8" opacity="0.5"/><line x1="23.1" y1="73.6" x2="10.6" y2="84.9" stroke="#b9cde6" stroke-width="0.8" opacity="0.5"/><line x1="10.0" y1="94.2" x2="18.1" y2="101.0" stroke="#b9cde6" stroke-width="1.1" opacity="0.5"/><line x1="33.5" y1="109.1" x2="39.4" y2="110.5" stroke="#b9cde6" stroke-width="0.6" opacity="0.5"/><line x1="36.2" y1="107.7" x2="39.2" y2="117.9" stroke="#b9cde6" stroke-width="0.7" opacity="0.5"/><line x1="13.4" y1="97.6" x2="4.2" y2="109.0" stroke="#b9cde6" stroke-width="0.6" opacity="0.5"/><line x1="17.1" y1="72.3" x2="29.2" y2="86.3" stroke="#b9cde6" stroke-width="1.1" opacity="0.5"/></g>
<path d="M152 70 L160 66 L171 57 L180 62 L192 67 L206 72 L198 80 L192 92 L210 96 L240 98 L256 104 V122 L210 126 L176 120 L166 100 L166 78z" fill="#325a92" filter="url(#mg4)"/>
<path d="M166 78 L176 64 L190 70 L182 80 L180 91 L172 91z" fill="#a9c0de" opacity=".6" filter="url(#mg4)"/>
<g filter="url(#mg4)"><line x1="186.3" y1="73.1" x2="185.2" y2="84.4" stroke="#c4d5ea" stroke-width="0.5" opacity="0.6"/><line x1="170.1" y1="70.5" x2="159.1" y2="84.0" stroke="#c4d5ea" stroke-width="1.4" opacity="0.6"/><line x1="168.3" y1="73.6" x2="167.2" y2="77.9" stroke="#c4d5ea" stroke-width="0.6" opacity="0.6"/><line x1="164.2" y1="70.6" x2="162.5" y2="76.1" stroke="#c4d5ea" stroke-width="1.4" opacity="0.6"/><line x1="191.7" y1="73.0" x2="197.8" y2="82.2" stroke="#c4d5ea" stroke-width="1.2" opacity="0.6"/><line x1="193.9" y1="76.5" x2="197.8" y2="88.7" stroke="#c4d5ea" stroke-width="0.6" opacity="0.6"/><line x1="189.9" y1="75.1" x2="196.3" y2="85.6" stroke="#c4d5ea" stroke-width="1.0" opacity="0.6"/><line x1="189.4" y1="72.2" x2="184.0" y2="92.1" stroke="#c4d5ea" stroke-width="1.3" opacity="0.6"/><line x1="170.9" y1="65.6" x2="161.5" y2="67.8" stroke="#c4d5ea" stroke-width="0.8" opacity="0.6"/><line x1="188.1" y1="72.1" x2="192.0" y2="74.6" stroke="#c4d5ea" stroke-width="1.1" opacity="0.6"/><line x1="171.4" y1="64.4" x2="172.1" y2="67.6" stroke="#c4d5ea" stroke-width="1.3" opacity="0.6"/><line x1="175.4" y1="66.0" x2="184.6" y2="73.9" stroke="#c4d5ea" stroke-width="1.1" opacity="0.6"/><line x1="171.5" y1="72.5" x2="163.1" y2="83.6" stroke="#c4d5ea" stroke-width="1.4" opacity="0.6"/><line x1="167.3" y1="74.0" x2="168.0" y2="89.6" stroke="#c4d5ea" stroke-width="0.6" opacity="0.6"/><line x1="233.1" y1="107.3" x2="223.1" y2="118.4" stroke="#23406c" stroke-width="0.9" opacity="0.65"/><line x1="229.5" y1="111.8" x2="238.3" y2="120.3" stroke="#23406c" stroke-width="0.7" opacity="0.65"/><line x1="192.1" y1="79.5" x2="197.0" y2="80.3" stroke="#23406c" stroke-width="1.3" opacity="0.65"/><line x1="192.8" y1="76.7" x2="195.4" y2="91.7" stroke="#23406c" stroke-width="1.4" opacity="0.65"/><line x1="170.4" y1="69.6" x2="164.1" y2="78.3" stroke="#23406c" stroke-width="1.0" opacity="0.65"/><line x1="165.1" y1="75.9" x2="164.4" y2="86.4" stroke="#23406c" stroke-width="0.9" opacity="0.65"/><line x1="170.6" y1="72.5" x2="167.4" y2="87.4" stroke="#23406c" stroke-width="0.9" opacity="0.65"/><line x1="179.9" y1="71.7" x2="185.1" y2="76.4" stroke="#23406c" stroke-width="0.9" opacity="0.65"/><line x1="170.2" y1="68.6" x2="175.8" y2="84.4" stroke="#23406c" stroke-width="0.7" opacity="0.65"/><line x1="190.1" y1="73.5" x2="186.8" y2="81.0" stroke="#23406c" stroke-width="1.1" opacity="0.65"/><line x1="173.9" y1="62.5" x2="179.0" y2="70.1" stroke="#23406c" stroke-width="0.9" opacity="0.65"/><line x1="181.3" y1="64.3" x2="170.4" y2="74.2" stroke="#23406c" stroke-width="0.9" opacity="0.65"/><line x1="199.5" y1="103.9" x2="190.1" y2="111.4" stroke="#23406c" stroke-width="0.7" opacity="0.65"/><line x1="227.0" y1="108.2" x2="227.8" y2="120.7" stroke="#23406c" stroke-width="1.1" opacity="0.65"/><line x1="176.0" y1="68.2" x2="176.8" y2="78.4" stroke="#23406c" stroke-width="1.1" opacity="0.65"/><line x1="201.4" y1="105.2" x2="205.1" y2="110.7" stroke="#23406c" stroke-width="1.2" opacity="0.65"/><line x1="190.7" y1="76.5" x2="184.1" y2="93.1" stroke="#23406c" stroke-width="1.0" opacity="0.65"/><line x1="228.4" y1="111.8" x2="230.2" y2="113.0" stroke="#23406c" stroke-width="1.2" opacity="0.65"/><line x1="187.2" y1="69.0" x2="179.6" y2="88.2" stroke="#23406c" stroke-width="1.3" opacity="0.65"/><line x1="187.2" y1="71.4" x2="194.4" y2="84.3" stroke="#23406c" stroke-width="0.8" opacity="0.65"/></g>
<path d="M52 130 Q62 100 80 88 Q86 68 100 58 Q118 48 140 50 Q158 54 164 70 Q170 84 178 100 Q186 116 190 130z" fill="url(#mw4)" opacity=".95" filter="url(#mf4)"/>
<path d="M70 130 Q76 108 96 100 Q112 92 124 104 Q140 96 152 108 Q160 118 164 130z" fill="#9dbce4" opacity=".8" filter="url(#mf4)"/>
<path d="M22 95 Q28 82 40 80 Q52 82 58 95z" fill="#c3d6ee" opacity=".8" filter="url(#mf4)"/>
<path d="M200 100 Q204 74 216 66 Q224 54 236 52 Q246 52 256 60 V100z" fill="url(#mr4)" filter="url(#mf4)"/>
<path d="M186 95 Q196 78 212 80 Q220 86 224 95z" fill="#b3c9e6" opacity=".75" filter="url(#mf4)"/>
<path d="M186 130 Q196 114 216 112 Q236 108 256 112 V130z" fill="#a9c6ea" opacity=".9" filter="url(#mf4)"/>

</g></svg></div>
<div class="b" style="left:498px;top:385px;width:48px;height:48px;background:#e9e8ed;border-radius:7px;"></div>
<svg style="left:509.2px;top:396.4px" width="25" height="25" viewBox="0 0 24 24"><path d="M6.18 15.64a2.18 2.18 0 1 0 0 4.36 2.18 2.18 0 1 0 0-4.36zM4 4.44v2.83c7.03 0 12.73 5.7 12.73 12.73h2.83c0-8.59-6.97-15.56-15.56-15.56zm0 5.66v2.83c3.9 0 7.07 3.17 7.07 7.07h2.83c0-5.47-4.43-9.9-9.9-9.9z" fill="#4c4c52" /></svg>
<div class="t" style="left:554.0px;top:395.4px;font-size:14.2px;font-weight:700;color:#3a3a40;letter-spacing:-0.27px;">Feeds Center</div>
<div class="t" style="left:554.0px;top:422.9px;font-size:13.5px;font-weight:400;color:#4a4a50;letter-spacing:-0.11px;">Channel Features</div>
<div class="t" style="left:556.0px;top:445.3px;font-size:13px;font-weight:400;color:#7a7a82;letter-spacing:0.14px;">The Feed feature lets app owners share news, updates, and</div>
<div class="t" style="left:556.0px;top:463.2px;font-size:13px;font-weight:400;color:#7a7a82;letter-spacing:0.24px;">messages with users.It can be added up to four times, each linked</div>
<div class="t" style="left:556.0px;top:481.1px;font-size:13px;font-weight:400;color:#7a7a82;letter-spacing:0.22px;">to a distinct chat label enabling tailored tabs like News, Sports, and</div>
<div class="t" style="left:556.0px;top:499.0px;font-size:13px;font-weight:400;color:#7a7a82;letter-spacing:0.19px;">more.</div>
<div class="b" style="left:877px;top:400px;width:123px;height:27.5px;background:#e9e8ed;border-radius:7px;"></div>
<div class="t" style="left:885.0px;top:407.0px;font-size:13.2px;font-weight:700;color:#3a3a40;letter-spacing:0.00px;transform:scaleX(0.947);transform-origin:0 0;">78 Features</div>
<div class="b" style="left:883px;top:583px;width:36px;height:36px;background:#fdfcff;border-radius:18px;"></div>
<svg style="left:893.3px;top:593.2px" width="15.4" height="15.4" viewBox="0 0 24 24"><path d="M19.140 12.940c.04-.3.06-.61.06-.94 0-.32-.02-.64-.07-.94l2.030-1.580c.18-.14.23-.41.12-.61l-1.920-3.320c-.12-.22-.37-.29-.59-.22l-2.390.96c-.5-.38-1.030-.7-1.620-.94l-.36-2.540c-.04-.24-.24-.41-.48-.41h-3.840c-.24 0-.43.17-.47.41l-.36 2.540c-.59.24-1.130.57-1.620.94l-2.390-.96c-.22-.08-.47 0-.59.22L2.740 8.870c-.12.21-.08.47.12.61l2.030 1.580c-.05.3-.09.63-.09.94s.02.64.07.94l-2.030 1.580c-.18.14-.23.41-.12.61l1.920 3.320c.12.22.37.29.59.22l2.390-.96c.5.38 1.030.7 1.620.94l.36 2.540c.05.24.24.41.48.41h3.840c.24 0 .44-.17.47-.41l.36-2.540c.59-.24 1.130-.56 1.620-.94l2.390.96c.22.08.47 0 .59-.22l1.920-3.320c.12-.22.07-.47-.12-.61l-2.010-1.580zM12 15.600c-1.980 0-3.600-1.620-3.600-3.600s1.620-3.600 3.600-3.600 3.600 1.620 3.600 3.600-1.620 3.600-3.600 3.600z" fill="#34343a" /></svg>
<div class="b" style="left:927px;top:583px;width:36px;height:36px;background:#fdfcff;border-radius:18px;"></div>
<svg style="left:939.300px;top:594.300px" width="11.600" height="13.600" viewBox="0 0 12 14"><path fill="#34343a" d="M4.200 0h3.600l.6 1.200H12v1.700H0V1.200h3.600z"/><path fill="#34343a" fill-rule="evenodd" d="M1 3.800h10V12.800a1.200 1.200 0 0 1-1.200 1.200H2.200A1.200 1.200 0 0 1 1 12.800z M3 5.200v7h1.300v-7z M5.350 5.200v7h1.300v-7z M7.700 5.200v7h1.300v-7z"/></svg>
<div class="b" style="left:961px;top:0px;width:389px;height:841px;background:#282a2c;border-radius:0px;box-shadow:-1px 0 2px rgba(0,0,0,.10);"></div>
<div class="b" style="left:961px;top:0px;width:389px;height:71px;background:#1d1d20;border-radius:0px;"></div>
<div class="b" style="left:961px;top:70px;width:389px;height:1.5px;background:#19191b;border-radius:0px;"></div>
<div class="b" style="left:961px;top:0px;width:1px;height:841px;background:#121214;border-radius:0px;"></div>
<div class="t" style="left:985.0px;top:25.9px;font-size:17px;font-weight:400;color:#f0f0f0;letter-spacing:0.21px;-webkit-text-stroke:0.5px #f0f0f0;">Feeds</div>
<svg style="left:1322.8px;top:23.8px" width="20.5" height="20.5" viewBox="0 0 24 24"><path d="M19 6.410L17.590 5 12 10.590 6.410 5 5 6.410 10.590 12 5 17.590 6.410 19 12 13.410 17.590 19 19 17.590 13.410 12z" fill="#fff" stroke="#fff" stroke-width="0.500"/></svg>
<div class="b" style="left:1348px;top:92px;width:2px;height:321px;background:#343538;border-radius:0px;"></div>
<div class="t" style="left:981.0px;top:104.9px;font-size:13.5px;font-weight:400;color:#f0f0f0;letter-spacing:0.70px;-webkit-text-stroke:0.35px #f0f0f0;">Component Label</div>
<div class="b" style="left:981px;top:129px;width:344px;height:37px;background:#35363a;border-radius:4px;border:1px solid #46474c;"></div>
<div class="t" style="left:994.2px;top:140.7px;font-size:13.8px;font-weight:400;color:#f0f0f0;letter-spacing:-0.04px;">Feeds</div>
<div class="t" style="left:981.0px;top:184.9px;font-size:13.5px;font-weight:400;color:#f0f0f0;letter-spacing:0.67px;-webkit-text-stroke:0.35px #f0f0f0;">Android Icon</div>
<div class="t" style="left:1196.2px;top:184.9px;font-size:13.5px;font-weight:400;color:#f0f0f0;letter-spacing:0.05px;-webkit-text-stroke:0.35px #f0f0f0;">iOS Icon</div>
<div class="b" style="left:981px;top:209px;width:129px;height:42px;background:#35363a;border-radius:4px;border:1px solid #46474c;"></div>
<svg style="left:1020.1px;top:216.3px" width="22" height="22" viewBox="0 0 24 24"><path d="M6.18 15.64a2.18 2.18 0 1 0 0 4.36 2.18 2.18 0 1 0 0-4.36zM4 4.44v2.83c7.03 0 12.73 5.7 12.73 12.73h2.83c0-8.59-6.97-15.56-15.56-15.56zm0 5.66v2.83c3.9 0 7.07 3.17 7.07 7.07h2.83c0-5.47-4.43-9.9-9.9-9.9z" fill="#f0f0f0" /></svg>
<svg style="left:1086.5px;top:222.2px" width="14.5" height="14.5" viewBox="0 0 24 24"><path d="M16.590 8.590L12 13.170 7.410 8.590 6 10l6 6 6-6z" fill="#f0f0f0" stroke="#f0f0f0" stroke-width="0.800"/></svg>
<div class="b" style="left:1196px;top:209px;width:129px;height:42px;background:#35363a;border-radius:4px;border:1px solid #46474c;"></div>
<svg style="left:1237.6px;top:219.5px" width="16" height="16" viewBox="0 0 16 16"><path d="M2.400 1.500 H10 L14.400 5.800 V13.600 a1 1 0 0 1 -1 1 H2.400 a1 1 0 0 1 -1 -1 V2.500 a1 1 0 0 1 1 -1z" fill="none" stroke="#f0f0f0" stroke-width="2"/><rect x="4" y="4.300" width="4.800" height="1.700" fill="#f0f0f0"/><rect x="4" y="7.300" width="8" height="1.700" fill="#f0f0f0"/><rect x="4" y="10.300" width="8" height="1.700" fill="#f0f0f0"/></svg>
<svg style="left:1301.3px;top:222.2px" width="14.5" height="14.5" viewBox="0 0 24 24"><path d="M16.590 8.590L12 13.170 7.410 8.590 6 10l6 6 6-6z" fill="#f0f0f0" stroke="#f0f0f0" stroke-width="0.800"/></svg>
<div class="b" style="left:961px;top:287px;width:384px;height:1.5px;background:#1b1b1d;border-radius:0px;"></div>
<div class="b" style="left:972px;top:304px;width:91px;height:30px;background:transparent;border-radius:1.5px;border:3px solid #e60a0a;"></div>
<div class="t" style="left:981.3px;top:311.7px;font-size:13.5px;font-weight:400;color:#f0f0f0;letter-spacing:0.51px;-webkit-text-stroke:0.35px #f0f0f0;">Chat Label</div>
<div class="b" style="left:961px;top:393.5px;width:384px;height:1.5px;background:#1b1b1d;border-radius:0px;"></div>
<div class="t" style="left:994.0px;top:420.4px;font-size:13.5px;font-weight:400;color:#c8c8c8;letter-spacing:0.00px;-webkit-text-stroke:0.2px #c8c8c8;transform:scaleX(0.851);transform-origin:0 0;">Allow Posting</div>
<svg style="left:1070.0px;top:417.3px" width="16" height="16" viewBox="0 0 24 24"><path d="M11 7h2v2h-2zm0 4h2v6h-2zm1-9C6.480 2 2 6.480 2 12s4.480 10 10 10 10-4.480 10-10S17.520 2 12 2zm0 18c-4.410 0-8-3.590-8-8s3.590-8 8-8 8 3.590 8 8-3.590 8-8 8z" fill="#d8d8d8" /></svg>
<div class="b" style="left:1268.5px;top:416px;width:52.0px;height:21px;background:#0d6efd;border-radius:10.5px;"></div>
<div class="b" style="left:1301.5px;top:418px;width:18.0px;height:18px;background:#fff;border-radius:9px;"></div>
<div class="b" style="left:981px;top:336px;width:344px;height:37px;background:#35363a;border-radius:4px;border:1px solid #606166;"></div>
<div class="t" style="left:994.2px;top:348.2px;font-size:13.8px;font-weight:400;color:#f0f0f0;letter-spacing:-0.04px;">Feeds</div>
<div class="b" style="left:981px;top:373.5px;width:344px;height:57.0px;background:#37383c;border-radius:0px;border:1px solid #6e6e72;"></div>
<div class="b" style="left:982px;top:374.5px;width:342px;height:27.0px;background:#1967d2;border-radius:0px;"></div>
<div class="t" style="left:994.2px;top:381.2px;font-size:13.8px;font-weight:400;color:#fff;letter-spacing:-0.04px;">Feeds</div>
<div class="t" style="left:994.2px;top:408.7px;font-size:13.8px;font-weight:400;color:#f0f0f0;letter-spacing:-0.16px;">Events</div>
<div class="b" style="left:981px;top:471.7px;width:18px;height:17.80000000000001px;background:#35363a;border-radius:3px;border:1px solid #46474c;"></div>
<svg style="left:983.5px;top:474.8px" width="13" height="13" viewBox="0 0 24 24"><path d="M9 16.170L4.830 12l-1.420 1.410L9 19 21 7l-1.410-1.410z" fill="#fff" stroke="#fff" stroke-width="2"/></svg>
<div class="t" style="left:1007.5px;top:473.7px;font-size:13.5px;font-weight:400;color:#f0f0f0;letter-spacing:-0.29px;-webkit-text-stroke:0.35px #f0f0f0;">Like</div>
<svg style="left:1038.5px;top:471.2px" width="16.5" height="16.5" viewBox="0 0 24 24"><path d="M11 7h2v2h-2zm0 4h2v6h-2zm1-9C6.480 2 2 6.480 2 12s4.480 10 10 10 10-4.480 10-10S17.520 2 12 2zm0 18c-4.410 0-8-3.590-8-8s3.590-8 8-8 8 3.590 8 8-3.590 8-8 8z" fill="#f0f0f0" stroke="#f0f0f0" stroke-width="0.500"/></svg>
<div class="b" style="left:1245px;top:461px;width:80px;height:37.5px;background:#35363a;border-radius:4px;border:1px solid #46474c;"></div>
<svg style="left:1259.0px;top:468.8px" width="21" height="21" viewBox="0 0 24 24"><path d="M9 21h9c.83 0 1.540-.5 1.840-1.220l3.020-7.050c.09-.23.14-.47.14-.73v-2c0-1.100-.9-2-2-2h-6.310l.95-4.570.03-.32c0-.41-.17-.79-.44-1.060L14.170 1 7.580 7.590C7.220 7.950 7 8.450 7 9v10c0 1.100.9 2 2 2zM9 9l4.340-4.340L12 10h9v2l-3 7H9V9zM1 9h4v12H1z" fill="#f0f0f0" /></svg>
<svg style="left:1300.8px;top:472.0px" width="14.5" height="14.5" viewBox="0 0 24 24"><path d="M16.590 8.590L12 13.170 7.410 8.590 6 10l6 6 6-6z" fill="#f0f0f0" stroke="#f0f0f0" stroke-width="0.800"/></svg>
<div class="t" style="left:981.0px;top:518.6px;font-size:13.5px;font-weight:400;color:#f0f0f0;letter-spacing:0.35px;-webkit-text-stroke:0.35px #f0f0f0;">Liked Color</div>
<div class="t" style="left:1247.6px;top:517.9px;font-size:13.5px;font-weight:400;color:#f0f0f0;letter-spacing:0.30px;-webkit-text-stroke:0.35px #f0f0f0;">Liked Icon</div>
<div class="b" style="left:981px;top:544px;width:47px;height:36px;background:#0d7bff;border-radius:4px;"></div>
<div class="t" style="left:994.2px;top:555.0px;font-size:12.7px;font-weight:400;color:#fff;letter-spacing:0.00px;-webkit-text-stroke:0.3px #fff;transform:scaleX(0.842);transform-origin:0 0;">SET</div>
<div class="b" style="left:1248px;top:543px;width:77px;height:38px;background:#35363a;border-radius:4px;border:1px solid #46474c;"></div>
<svg style="left:1261.0px;top:551.0px" width="21" height="21" viewBox="0 0 24 24"><path d="M1 21h4V9H1v12zm22-11c0-1.1-.9-2-2-2h-6.31l.95-4.57.03-.32c0-.41-.17-.79-.44-1.060L14.170 1 7.590 7.590C7.220 7.950 7 8.450 7 9v10c0 1.100.9 2 2 2h9c.83 0 1.540-.5 1.840-1.220l3.020-7.050c.09-.23.14-.47.14-.73v-2z" fill="#f0f0f0" /></svg>
<svg style="left:1300.8px;top:554.2px" width="14.5" height="14.5" viewBox="0 0 24 24"><path d="M16.590 8.590L12 13.170 7.410 8.590 6 10l6 6 6-6z" fill="#f0f0f0" stroke="#f0f0f0" stroke-width="0.800"/></svg>
<div class="b" style="left:981px;top:608.5px;width:18px;height:17.799999999999955px;background:#35363a;border-radius:3px;border:1px solid #46474c;"></div>
<svg style="left:983.5px;top:611.6px" width="13" height="13" viewBox="0 0 24 24"><path d="M9 16.170L4.830 12l-1.420 1.410L9 19 21 7l-1.410-1.410z" fill="#fff" stroke="#fff" stroke-width="2"/></svg>
<div class="t" style="left:1007.5px;top:610.5px;font-size:13.5px;font-weight:400;color:#f0f0f0;letter-spacing:0.23px;-webkit-text-stroke:0.35px #f0f0f0;">Replies</div>
<svg style="left:1061.0px;top:608.0px" width="16.5" height="16.5" viewBox="0 0 24 24"><path d="M11 7h2v2h-2zm0 4h2v6h-2zm1-9C6.480 2 2 6.480 2 12s4.480 10 10 10 10-4.480 10-10S17.520 2 12 2zm0 18c-4.410 0-8-3.590-8-8s3.590-8 8-8 8 3.590 8 8-3.590 8-8 8z" fill="#f0f0f0" stroke="#f0f0f0" stroke-width="0.500"/></svg>
<div class="b" style="left:1245px;top:597.5px;width:80px;height:38.0px;background:#35363a;border-radius:4px;border:1px solid #46474c;"></div>
<svg style="left:1259.5px;top:606.0px" width="20" height="20" viewBox="0 0 24 24"><path d="M20 17.170L18.830 16H4V4h16v13.170zM20 2H4c-1.100 0-2 .9-2 2v12c0 1.100.9 2 2 2h14l4 4V4c0-1.100-.9-2-2-2z" fill="#f0f0f0" /></svg>
<svg style="left:1300.8px;top:608.8px" width="14.5" height="14.5" viewBox="0 0 24 24"><path d="M16.590 8.590L12 13.170 7.410 8.590 6 10l6 6 6-6z" fill="#f0f0f0" stroke="#f0f0f0" stroke-width="0.800"/></svg>
<div class="b" style="left:981px;top:663.3000000000001px;width:18px;height:17.799999999999955px;background:#35363a;border-radius:3px;border:1px solid #46474c;"></div>
<svg style="left:983.5px;top:666.4px" width="13" height="13" viewBox="0 0 24 24"><path d="M9 16.170L4.830 12l-1.420 1.410L9 19 21 7l-1.410-1.410z" fill="#fff" stroke="#fff" stroke-width="2"/></svg>
<div class="t" style="left:1007.5px;top:665.3px;font-size:13.5px;font-weight:400;color:#f0f0f0;letter-spacing:0.06px;-webkit-text-stroke:0.35px #f0f0f0;">Seen</div>
<svg style="left:1046.7px;top:662.9px" width="16.5" height="16.5" viewBox="0 0 24 24"><path d="M11 7h2v2h-2zm0 4h2v6h-2zm1-9C6.480 2 2 6.480 2 12s4.480 10 10 10 10-4.480 10-10S17.520 2 12 2zm0 18c-4.410 0-8-3.590-8-8s3.590-8 8-8 8 3.590 8 8-3.590 8-8 8z" fill="#f0f0f0" stroke="#f0f0f0" stroke-width="0.500"/></svg>
<div class="b" style="left:1245px;top:652px;width:80px;height:38px;background:#35363a;border-radius:4px;border:1px solid #46474c;"></div>
<svg style="left:1259.0px;top:660.0px" width="21" height="21" viewBox="0 0 24 24"><path d="M12 2C6.480 2 2 6.480 2 12s4.480 10 10 10 10-4.480 10-10S17.520 2 12 2zm-2 15l-5-5 1.410-1.410L10 14.170l7.590-7.590L19 8l-9 9z" fill="#f0f0f0" /></svg>
<svg style="left:1300.8px;top:663.2px" width="14.5" height="14.5" viewBox="0 0 24 24"><path d="M16.590 8.590L12 13.170 7.410 8.590 6 10l6 6 6-6z" fill="#f0f0f0" stroke="#f0f0f0" stroke-width="0.800"/></svg>
<div class="b" style="left:981px;top:717.8000000000001px;width:18px;height:17.799999999999955px;background:#35363a;border-radius:3px;border:1px solid #46474c;"></div>
<svg style="left:983.5px;top:720.9px" width="13" height="13" viewBox="0 0 24 24"><path d="M9 16.170L4.830 12l-1.420 1.410L9 19 21 7l-1.410-1.410z" fill="#fff" stroke="#fff" stroke-width="2"/></svg>
<div class="t" style="left:1007.5px;top:719.8px;font-size:13.5px;font-weight:400;color:#f0f0f0;letter-spacing:0.34px;-webkit-text-stroke:0.35px #f0f0f0;">Share</div>
<svg style="left:1052.3px;top:717.4px" width="16.5" height="16.5" viewBox="0 0 24 24"><path d="M11 7h2v2h-2zm0 4h2v6h-2zm1-9C6.480 2 2 6.480 2 12s4.480 10 10 10 10-4.480 10-10S17.520 2 12 2zm0 18c-4.410 0-8-3.590-8-8s3.590-8 8-8 8 3.590 8 8-3.590 8-8 8z" fill="#f0f0f0" stroke="#f0f0f0" stroke-width="0.500"/></svg>
<div class="b" style="left:1245px;top:706.5px;width:80px;height:38.0px;background:#35363a;border-radius:4px;border:1px solid #46474c;"></div>
<svg style="left:1259.5px;top:715.0px" width="20" height="20" viewBox="0 0 24 24"><path d="M15 5l-1.410 1.410L18.170 11H2v2h16.170l-4.590 4.590L15 19l7-7-7-7z" fill="#f0f0f0" /></svg>
<svg style="left:1300.8px;top:717.8px" width="14.5" height="14.5" viewBox="0 0 24 24"><path d="M16.590 8.590L12 13.170 7.410 8.590 6 10l6 6 6-6z" fill="#f0f0f0" stroke="#f0f0f0" stroke-width="0.800"/></svg>
<div class="b" style="left:961px;top:781px;width:384px;height:1.5px;background:#1b1b1d;border-radius:0px;"></div>
<div class="t" style="left:981.4px;top:805.9px;font-size:15.5px;font-weight:700;color:#fff;letter-spacing:0.07px;">Assign tag to post</div>
<svg style="left:1122.0px;top:804.8px" width="17" height="17" viewBox="0 0 24 24"><path d="M11 7h2v2h-2zm0 4h2v6h-2zm1-9C6.480 2 2 6.480 2 12s4.480 10 10 10 10-4.480 10-10S17.520 2 12 2zm0 18c-4.410 0-8-3.590-8-8s3.590-8 8-8 8 3.590 8 8-3.590 8-8 8z" fill="#f0f0f0" stroke="#f0f0f0" stroke-width="0.500"/></svg>
<div class="b" style="left:1267.5px;top:803.5px;width:53.0px;height:21.0px;background:#dcdce0;border-radius:10.5px;"></div>
<div class="b" style="left:1267.5px;top:803.5px;width:21.0px;height:21.0px;background:#6e6e74;border-radius:10.5px;"></div>
<div class="t" style="left:1292.5px;top:807.9px;font-size:12.5px;font-weight:400;color:#707076;letter-spacing:0.63px;-webkit-text-stroke:0.3px #707076;">Off</div>
</body></html>
